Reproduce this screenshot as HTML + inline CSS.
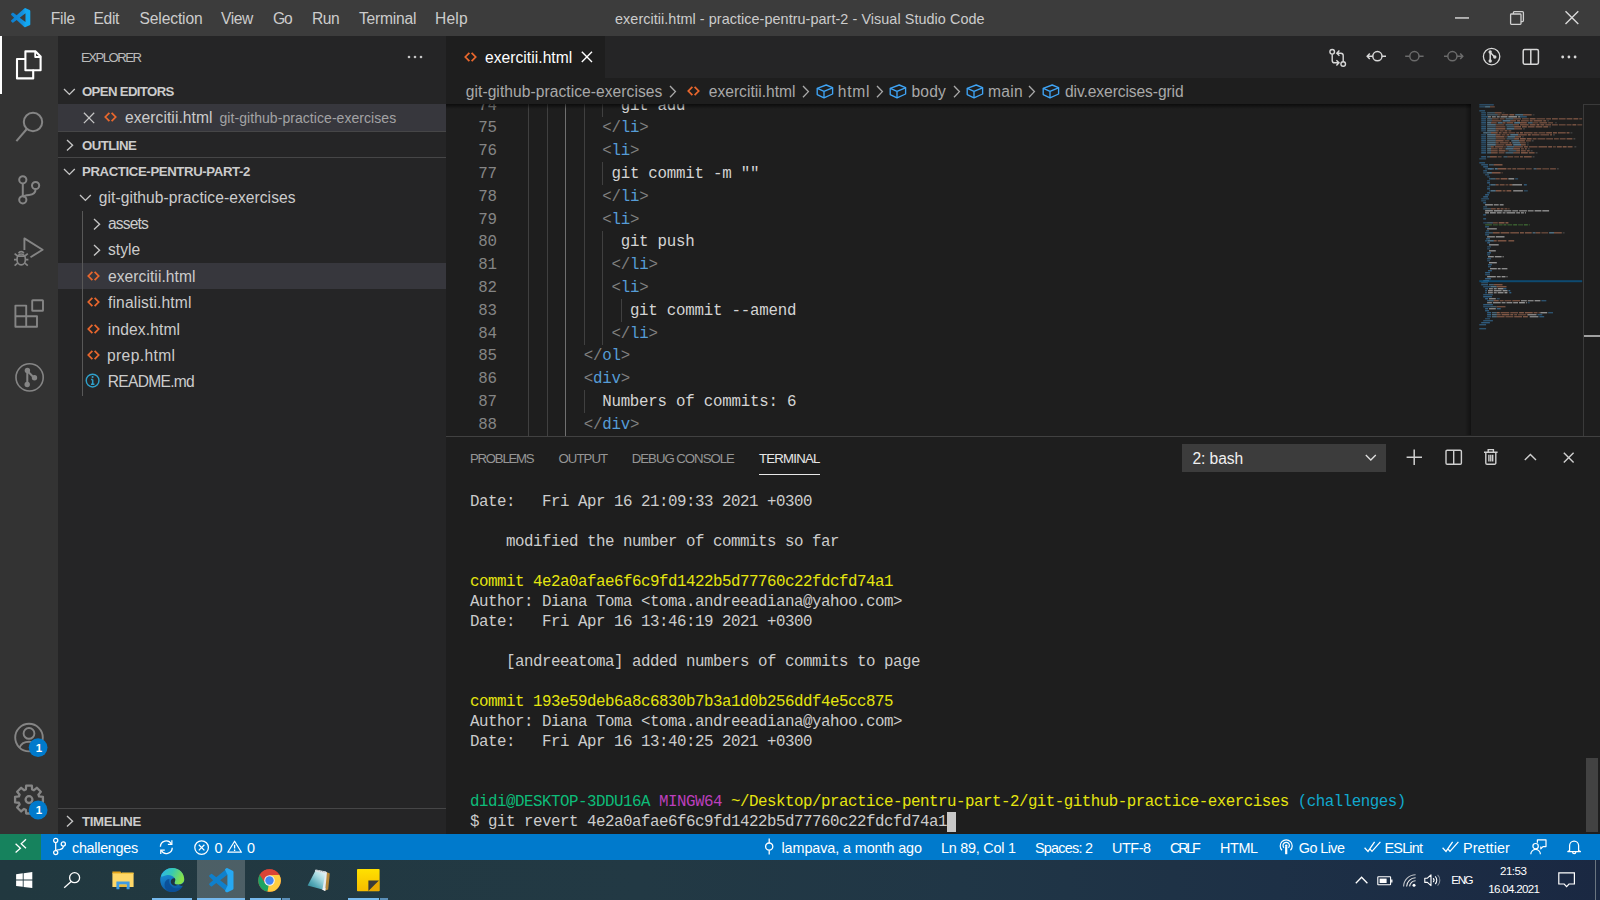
<!DOCTYPE html>
<html lang="en">
<head>
<meta charset="utf-8">
<title>exercitii.html - practice-pentru-part-2 - Visual Studio Code</title>
<style>
*{margin:0;padding:0;box-sizing:border-box}
html,body{width:1600px;height:900px;overflow:hidden;background:#1e1e1e}
body{font-family:"Liberation Sans",sans-serif;-webkit-font-smoothing:antialiased}
#root{position:relative;width:1600px;height:900px;overflow:hidden;background:#1e1e1e}
.b{position:absolute}
.t{position:absolute;white-space:pre;line-height:20px;height:20px}
.m{position:absolute;white-space:pre;font-family:"Liberation Mono",monospace}
svg{position:absolute;overflow:visible}
.ln{color:#858585}
.g{color:#808080}.k{color:#569cd6}.w{color:#d4d4d4}
.y{color:#e5e510}.gr{color:#0dbc79}.mg{color:#bc3fbc}.cy{color:#11a8cd}.f{color:#cccccc}
</style>
</head>
<body>
<div id="root">
<!-- title bar -->
<div class="b" style="left:0;top:0;width:1600px;height:36px;background:#3c3c3c"></div>
<!-- activity bar -->
<div class="b" style="left:0;top:36px;width:58px;height:798px;background:#333333"></div>
<div class="b" style="left:0;top:36px;width:2px;height:58px;background:#ffffff"></div>
<!-- sidebar -->
<div class="b" style="left:58px;top:36px;width:388px;height:798px;background:#252526"></div>
<div class="b" style="left:58px;top:104px;width:388px;height:27px;background:#37373d"></div>
<div class="b" style="left:58px;top:131px;width:388px;height:1px;background:#464647"></div>
<div class="b" style="left:58px;top:157px;width:388px;height:1px;background:#464647"></div>
<div class="b" style="left:58px;top:263px;width:388px;height:26px;background:#37373d"></div>
<div class="b" style="left:82px;top:210.5px;width:1px;height:185px;background:#585858"></div>
<div class="b" style="left:58px;top:807.5px;width:388px;height:1px;background:#464647"></div>
<!-- editor group: tab bar -->
<div class="b" style="left:446px;top:36px;width:1154px;height:42px;background:#252526"></div>
<div class="b" style="left:446px;top:36px;width:159px;height:42px;background:#1e1e1e"></div>
<!-- breadcrumb shadow -->
<div class="b" style="left:446px;top:104px;width:1025px;height:5px;background:linear-gradient(#00000099,#00000000);z-index:5"></div>
<!-- minimap shadow + ruler border -->
<div class="b" style="left:1465px;top:104px;width:6px;height:331px;background:linear-gradient(90deg,#00000000,#00000066)"></div>
<div class="b" style="left:1583px;top:104px;width:1px;height:332px;background:#3a3a3a"></div>
<div class="b" style="left:1583px;top:104px;width:17px;height:1px;background:#3a3a3a"></div>
<div class="b" style="left:1584px;top:334.5px;width:16px;height:2.4px;background:#a0a0a0"></div>
<!-- panel -->
<div class="b" style="left:446px;top:435.5px;width:1154px;height:1px;background:#414141"></div>
<div class="b" style="left:759px;top:474px;width:61px;height:1.2px;background:#e7e7e7"></div>
<div class="b" style="left:1182px;top:444.2px;width:204px;height:27.6px;background:#3c3c3c"></div>
<div class="b" style="left:1586px;top:758px;width:12px;height:74px;background:#424242"></div>
<div class="b" style="left:947px;top:812px;width:9px;height:20px;background:#c8c8c8"></div>
<!-- status bar -->
<div class="b" style="left:0;top:834px;width:1600px;height:26px;background:#007acc"></div>
<div class="b" style="left:0;top:834px;width:41px;height:26px;background:#16825d"></div>
<!-- taskbar -->
<div class="b" style="left:0;top:860px;width:1600px;height:40px;background:linear-gradient(90deg,#21383f 0%,#223944 40%,#203646 60%,#1d3046 80%,#1a2842 100%)"></div>
<div class="b" style="left:197px;top:860px;width:48px;height:40px;background:rgba(255,255,255,.195)"></div>
<div class="b" style="left:152px;top:898px;width:40px;height:2px;background:#76b9ed"></div>
<div class="b" style="left:197px;top:898px;width:48px;height:2px;background:#76b9ed"></div>
<div class="b" style="left:250px;top:898px;width:31.4px;height:2px;background:#76b9ed"></div>
<div class="b" style="left:282.3px;top:898px;width:7.7px;height:2px;background:#5b8fb8"></div>
<div class="b" style="left:348px;top:898px;width:31.2px;height:2px;background:#76b9ed"></div>
<div class="b" style="left:380.2px;top:898px;width:7.8px;height:2px;background:#5b8fb8"></div>
<div class="b" style="left:1595px;top:860px;width:1px;height:40px;background:#6a7580"></div>
<svg style="left:0;top:0" width="1600" height="440" viewBox="0 0 1600 440">
<rect x="1479.3" y="280.20" width="102.9" height="2" fill="#0e4a70"/>
<g opacity="0.85">
<rect x="1479.3" y="104.2" width="14.5" height="1.25" fill="#3b80b4" opacity="0.66"/>
<rect x="1479.3" y="106.2" width="5.8" height="1.25" fill="#3b80b4" opacity="0.60"/>
<rect x="1485.1" y="106.2" width="4.9" height="1.25" fill="#74aacb" opacity="0.78"/>
<rect x="1490.0" y="106.2" width="4.8" height="1.25" fill="#bd7c5f" opacity="0.58"/>
<rect x="1479.3" y="110.2" width="5.8" height="1.25" fill="#3b80b4" opacity="0.74"/>
<rect x="1481.2" y="112.2" width="4.8" height="1.25" fill="#3b80b4" opacity="0.68"/>
<rect x="1487.1" y="112.2" width="7.8" height="1.25" fill="#74aacb" opacity="0.57"/>
<rect x="1494.8" y="112.2" width="6.8" height="1.25" fill="#bd7c5f" opacity="0.73"/>
<rect x="1502.6" y="112.2" width="1.9" height="1.25" fill="#5c5c5c" opacity="0.56"/>
<rect x="1481.2" y="114.2" width="4.8" height="1.25" fill="#3b80b4" opacity="0.70"/>
<rect x="1487.1" y="114.2" width="10.7" height="1.25" fill="#74aacb" opacity="0.57"/>
<rect x="1497.7" y="114.2" width="2.9" height="1.25" fill="#bd7c5f" opacity="0.57"/>
<rect x="1501.6" y="114.2" width="6.8" height="1.25" fill="#bd7c5f" opacity="0.75"/>
<rect x="1509.4" y="114.2" width="4.9" height="1.25" fill="#bd7c5f" opacity="0.88"/>
<rect x="1515.2" y="114.2" width="7.8" height="1.25" fill="#74aacb" opacity="0.77"/>
<rect x="1523.0" y="114.2" width="8.7" height="1.25" fill="#bd7c5f" opacity="0.75"/>
<rect x="1532.6" y="114.2" width="1.9" height="1.25" fill="#5c5c5c" opacity="0.57"/>
<rect x="1481.2" y="116.2" width="6.8" height="1.25" fill="#3b80b4" opacity="0.75"/>
<rect x="1488.0" y="116.2" width="2.9" height="1.25" fill="#bdbdbd" opacity="0.86"/>
<rect x="1491.9" y="116.2" width="3.9" height="1.25" fill="#bdbdbd" opacity="0.83"/>
<rect x="1496.8" y="116.2" width="2.9" height="1.25" fill="#bdbdbd" opacity="0.82"/>
<rect x="1500.6" y="116.2" width="6.8" height="1.25" fill="#bdbdbd" opacity="0.86"/>
<rect x="1508.4" y="116.2" width="8.7" height="1.25" fill="#bdbdbd" opacity="0.96"/>
<rect x="1518.1" y="116.2" width="1.9" height="1.25" fill="#bdbdbd" opacity="0.84"/>
<rect x="1520.0" y="116.2" width="6.8" height="1.25" fill="#3b80b4" opacity="0.75"/>
<rect x="1481.2" y="118.2" width="4.8" height="1.25" fill="#3b80b4" opacity="0.77"/>
<rect x="1487.1" y="118.2" width="4.8" height="1.25" fill="#74aacb" opacity="0.68"/>
<rect x="1491.9" y="118.2" width="6.8" height="1.25" fill="#bd7c5f" opacity="0.57"/>
<rect x="1499.7" y="118.2" width="4.9" height="1.25" fill="#bd7c5f" opacity="0.57"/>
<rect x="1505.5" y="118.2" width="7.8" height="1.25" fill="#74aacb" opacity="0.62"/>
<rect x="1513.2" y="118.2" width="7.8" height="1.25" fill="#bd7c5f" opacity="0.64"/>
<rect x="1522.0" y="118.2" width="6.8" height="1.25" fill="#bd7c5f" opacity="0.61"/>
<rect x="1529.7" y="118.2" width="5.8" height="1.25" fill="#bd7c5f" opacity="0.82"/>
<rect x="1536.5" y="118.2" width="8.7" height="1.25" fill="#bd7c5f" opacity="0.58"/>
<rect x="1546.2" y="118.2" width="4.8" height="1.25" fill="#bd7c5f" opacity="0.66"/>
<rect x="1552.0" y="118.2" width="5.8" height="1.25" fill="#bd7c5f" opacity="0.72"/>
<rect x="1558.8" y="118.2" width="6.8" height="1.25" fill="#bd7c5f" opacity="0.67"/>
<rect x="1566.6" y="118.2" width="5.8" height="1.25" fill="#bd7c5f" opacity="0.71"/>
<rect x="1573.4" y="118.2" width="4.9" height="1.25" fill="#bd7c5f" opacity="0.76"/>
<rect x="1579.2" y="118.2" width="3.0" height="1.25" fill="#bd7c5f" opacity="0.58"/>
<rect x="1481.2" y="120.2" width="4.8" height="1.25" fill="#3b80b4" opacity="0.73"/>
<rect x="1487.1" y="120.2" width="4.8" height="1.25" fill="#74aacb" opacity="0.61"/>
<rect x="1491.9" y="120.2" width="9.7" height="1.25" fill="#bd7c5f" opacity="0.67"/>
<rect x="1502.6" y="120.2" width="7.8" height="1.25" fill="#74aacb" opacity="0.88"/>
<rect x="1510.3" y="120.2" width="5.8" height="1.25" fill="#bd7c5f" opacity="0.75"/>
<rect x="1517.1" y="120.2" width="2.9" height="1.25" fill="#bd7c5f" opacity="0.86"/>
<rect x="1521.0" y="120.2" width="7.8" height="1.25" fill="#bd7c5f" opacity="0.66"/>
<rect x="1529.7" y="120.2" width="2.9" height="1.25" fill="#bd7c5f" opacity="0.79"/>
<rect x="1533.6" y="120.2" width="8.7" height="1.25" fill="#bd7c5f" opacity="0.76"/>
<rect x="1543.3" y="120.2" width="2.9" height="1.25" fill="#bd7c5f" opacity="0.75"/>
<rect x="1547.2" y="120.2" width="1.9" height="1.25" fill="#5c5c5c" opacity="0.71"/>
<rect x="1481.2" y="122.2" width="4.8" height="1.25" fill="#3b80b4" opacity="0.84"/>
<rect x="1487.1" y="122.2" width="3.9" height="1.25" fill="#74aacb" opacity="0.88"/>
<rect x="1490.9" y="122.2" width="5.8" height="1.25" fill="#bd7c5f" opacity="0.72"/>
<rect x="1497.7" y="122.2" width="4.8" height="1.25" fill="#74aacb" opacity="0.78"/>
<rect x="1502.6" y="122.2" width="2.9" height="1.25" fill="#bd7c5f" opacity="0.80"/>
<rect x="1506.5" y="122.2" width="6.8" height="1.25" fill="#bd7c5f" opacity="0.78"/>
<rect x="1514.2" y="122.2" width="5.8" height="1.25" fill="#74aacb" opacity="0.90"/>
<rect x="1520.0" y="122.2" width="6.8" height="1.25" fill="#bd7c5f" opacity="0.84"/>
<rect x="1527.8" y="122.2" width="4.8" height="1.25" fill="#74aacb" opacity="0.65"/>
<rect x="1532.6" y="122.2" width="5.8" height="1.25" fill="#bd7c5f" opacity="0.56"/>
<rect x="1539.4" y="122.2" width="7.8" height="1.25" fill="#bd7c5f" opacity="0.71"/>
<rect x="1548.2" y="122.2" width="4.8" height="1.25" fill="#bd7c5f" opacity="0.61"/>
<rect x="1555.0" y="122.2" width="1.9" height="1.25" fill="#5c5c5c" opacity="0.59"/>
<rect x="1481.2" y="124.2" width="4.8" height="1.25" fill="#3b80b4" opacity="0.57"/>
<rect x="1487.1" y="124.2" width="8.7" height="1.25" fill="#74aacb" opacity="0.82"/>
<rect x="1495.8" y="124.2" width="8.7" height="1.25" fill="#bd7c5f" opacity="0.60"/>
<rect x="1505.5" y="124.2" width="7.8" height="1.25" fill="#74aacb" opacity="0.64"/>
<rect x="1513.2" y="124.2" width="5.8" height="1.25" fill="#bd7c5f" opacity="0.70"/>
<rect x="1520.0" y="124.2" width="8.7" height="1.25" fill="#bd7c5f" opacity="0.74"/>
<rect x="1529.7" y="124.2" width="5.8" height="1.25" fill="#bd7c5f" opacity="0.80"/>
<rect x="1536.5" y="124.2" width="2.9" height="1.25" fill="#bd7c5f" opacity="0.90"/>
<rect x="1540.4" y="124.2" width="3.9" height="1.25" fill="#bd7c5f" opacity="0.79"/>
<rect x="1545.3" y="124.2" width="5.8" height="1.25" fill="#bd7c5f" opacity="0.68"/>
<rect x="1552.0" y="124.2" width="5.8" height="1.25" fill="#bd7c5f" opacity="0.63"/>
<rect x="1558.8" y="124.2" width="6.8" height="1.25" fill="#bd7c5f" opacity="0.58"/>
<rect x="1566.6" y="124.2" width="4.9" height="1.25" fill="#bd7c5f" opacity="0.60"/>
<rect x="1572.4" y="124.2" width="3.9" height="1.25" fill="#bd7c5f" opacity="0.78"/>
<rect x="1577.3" y="124.2" width="4.9" height="1.25" fill="#bd7c5f" opacity="0.55"/>
<rect x="1481.2" y="126.2" width="4.8" height="1.25" fill="#3b80b4" opacity="0.84"/>
<rect x="1487.1" y="126.2" width="8.7" height="1.25" fill="#74aacb" opacity="0.61"/>
<rect x="1495.8" y="126.2" width="9.7" height="1.25" fill="#bd7c5f" opacity="0.65"/>
<rect x="1506.5" y="126.2" width="7.8" height="1.25" fill="#74aacb" opacity="0.60"/>
<rect x="1514.2" y="126.2" width="6.8" height="1.25" fill="#bd7c5f" opacity="0.88"/>
<rect x="1522.0" y="126.2" width="4.8" height="1.25" fill="#bd7c5f" opacity="0.79"/>
<rect x="1527.8" y="126.2" width="6.8" height="1.25" fill="#bd7c5f" opacity="0.73"/>
<rect x="1535.6" y="126.2" width="6.8" height="1.25" fill="#bd7c5f" opacity="0.77"/>
<rect x="1543.3" y="126.2" width="4.9" height="1.25" fill="#bd7c5f" opacity="0.79"/>
<rect x="1549.1" y="126.2" width="1.9" height="1.25" fill="#5c5c5c" opacity="0.57"/>
<rect x="1481.2" y="128.2" width="4.8" height="1.25" fill="#3b80b4" opacity="0.86"/>
<rect x="1487.1" y="128.2" width="8.7" height="1.25" fill="#74aacb" opacity="0.82"/>
<rect x="1495.8" y="128.2" width="9.7" height="1.25" fill="#bd7c5f" opacity="0.86"/>
<rect x="1506.5" y="128.2" width="7.8" height="1.25" fill="#74aacb" opacity="0.83"/>
<rect x="1514.2" y="128.2" width="7.8" height="1.25" fill="#bd7c5f" opacity="0.69"/>
<rect x="1523.0" y="128.2" width="1.9" height="1.25" fill="#5c5c5c" opacity="0.69"/>
<rect x="1481.2" y="130.2" width="4.8" height="1.25" fill="#3b80b4" opacity="0.59"/>
<rect x="1487.1" y="130.2" width="8.7" height="1.25" fill="#74aacb" opacity="0.77"/>
<rect x="1495.8" y="130.2" width="2.9" height="1.25" fill="#bd7c5f" opacity="0.70"/>
<rect x="1499.7" y="130.2" width="3.9" height="1.25" fill="#bd7c5f" opacity="0.59"/>
<rect x="1504.5" y="130.2" width="2.9" height="1.25" fill="#bd7c5f" opacity="0.76"/>
<rect x="1508.4" y="130.2" width="2.9" height="1.25" fill="#bd7c5f" opacity="0.59"/>
<rect x="1483.2" y="132.2" width="7.8" height="1.25" fill="#74aacb" opacity="0.75"/>
<rect x="1490.9" y="132.2" width="6.8" height="1.25" fill="#bd7c5f" opacity="0.88"/>
<rect x="1498.7" y="132.2" width="2.9" height="1.25" fill="#bd7c5f" opacity="0.76"/>
<rect x="1502.6" y="132.2" width="4.9" height="1.25" fill="#bd7c5f" opacity="0.72"/>
<rect x="1508.4" y="132.2" width="6.8" height="1.25" fill="#bd7c5f" opacity="0.59"/>
<rect x="1516.2" y="132.2" width="2.9" height="1.25" fill="#bd7c5f" opacity="0.72"/>
<rect x="1520.0" y="132.2" width="2.9" height="1.25" fill="#bd7c5f" opacity="0.89"/>
<rect x="1523.9" y="132.2" width="8.7" height="1.25" fill="#bd7c5f" opacity="0.72"/>
<rect x="1533.6" y="132.2" width="3.9" height="1.25" fill="#bd7c5f" opacity="0.66"/>
<rect x="1538.5" y="132.2" width="6.8" height="1.25" fill="#bd7c5f" opacity="0.60"/>
<rect x="1546.2" y="132.2" width="5.8" height="1.25" fill="#bd7c5f" opacity="0.81"/>
<rect x="1553.0" y="132.2" width="3.9" height="1.25" fill="#bd7c5f" opacity="0.81"/>
<rect x="1557.9" y="132.2" width="7.8" height="1.25" fill="#bd7c5f" opacity="0.72"/>
<rect x="1566.6" y="132.2" width="2.9" height="1.25" fill="#bd7c5f" opacity="0.79"/>
<rect x="1570.5" y="132.2" width="1.9" height="1.25" fill="#5c5c5c" opacity="0.73"/>
<rect x="1481.2" y="134.2" width="4.8" height="1.25" fill="#3b80b4" opacity="0.62"/>
<rect x="1487.1" y="134.2" width="8.7" height="1.25" fill="#74aacb" opacity="0.88"/>
<rect x="1495.8" y="134.2" width="4.8" height="1.25" fill="#bd7c5f" opacity="0.74"/>
<rect x="1501.6" y="134.2" width="3.9" height="1.25" fill="#bd7c5f" opacity="0.56"/>
<rect x="1506.5" y="134.2" width="2.9" height="1.25" fill="#bd7c5f" opacity="0.73"/>
<rect x="1510.3" y="134.2" width="7.8" height="1.25" fill="#74aacb" opacity="0.89"/>
<rect x="1518.1" y="134.2" width="8.7" height="1.25" fill="#bd7c5f" opacity="0.73"/>
<rect x="1527.8" y="134.2" width="2.9" height="1.25" fill="#bd7c5f" opacity="0.87"/>
<rect x="1531.7" y="134.2" width="7.8" height="1.25" fill="#bd7c5f" opacity="0.67"/>
<rect x="1540.4" y="134.2" width="8.7" height="1.25" fill="#bd7c5f" opacity="0.63"/>
<rect x="1550.1" y="134.2" width="1.9" height="1.25" fill="#bd7c5f" opacity="0.74"/>
<rect x="1553.0" y="134.2" width="1.9" height="1.25" fill="#5c5c5c" opacity="0.73"/>
<rect x="1481.2" y="136.2" width="4.8" height="1.25" fill="#3b80b4" opacity="0.77"/>
<rect x="1487.1" y="136.2" width="8.7" height="1.25" fill="#74aacb" opacity="0.76"/>
<rect x="1495.8" y="136.2" width="8.7" height="1.25" fill="#bd7c5f" opacity="0.85"/>
<rect x="1505.5" y="136.2" width="1.0" height="1.25" fill="#bd7c5f" opacity="0.83"/>
<rect x="1507.4" y="136.2" width="7.8" height="1.25" fill="#74aacb" opacity="0.84"/>
<rect x="1515.2" y="136.2" width="5.8" height="1.25" fill="#bd7c5f" opacity="0.81"/>
<rect x="1522.0" y="136.2" width="1.9" height="1.25" fill="#5c5c5c" opacity="0.63"/>
<rect x="1481.2" y="138.2" width="4.8" height="1.25" fill="#3b80b4" opacity="0.73"/>
<rect x="1487.1" y="138.2" width="8.7" height="1.25" fill="#74aacb" opacity="0.67"/>
<rect x="1495.8" y="138.2" width="9.7" height="1.25" fill="#bd7c5f" opacity="0.56"/>
<rect x="1506.5" y="138.2" width="7.8" height="1.25" fill="#74aacb" opacity="0.56"/>
<rect x="1514.2" y="138.2" width="4.8" height="1.25" fill="#bd7c5f" opacity="0.88"/>
<rect x="1520.0" y="138.2" width="5.8" height="1.25" fill="#bd7c5f" opacity="0.90"/>
<rect x="1526.8" y="138.2" width="4.8" height="1.25" fill="#bd7c5f" opacity="0.88"/>
<rect x="1532.6" y="138.2" width="3.9" height="1.25" fill="#bd7c5f" opacity="0.68"/>
<rect x="1537.5" y="138.2" width="7.8" height="1.25" fill="#bd7c5f" opacity="0.63"/>
<rect x="1546.2" y="138.2" width="6.8" height="1.25" fill="#bd7c5f" opacity="0.63"/>
<rect x="1554.0" y="138.2" width="4.8" height="1.25" fill="#bd7c5f" opacity="0.62"/>
<rect x="1559.8" y="138.2" width="5.8" height="1.25" fill="#bd7c5f" opacity="0.62"/>
<rect x="1566.6" y="138.2" width="5.8" height="1.25" fill="#bd7c5f" opacity="0.77"/>
<rect x="1573.4" y="138.2" width="1.9" height="1.25" fill="#5c5c5c" opacity="0.87"/>
<rect x="1481.2" y="140.2" width="4.8" height="1.25" fill="#3b80b4" opacity="0.84"/>
<rect x="1487.1" y="140.2" width="8.7" height="1.25" fill="#74aacb" opacity="0.72"/>
<rect x="1495.8" y="140.2" width="7.8" height="1.25" fill="#bd7c5f" opacity="0.83"/>
<rect x="1504.5" y="140.2" width="4.8" height="1.25" fill="#bd7c5f" opacity="0.58"/>
<rect x="1511.3" y="140.2" width="7.8" height="1.25" fill="#74aacb" opacity="0.78"/>
<rect x="1519.1" y="140.2" width="5.8" height="1.25" fill="#bd7c5f" opacity="0.80"/>
<rect x="1525.9" y="140.2" width="4.9" height="1.25" fill="#bd7c5f" opacity="0.62"/>
<rect x="1531.7" y="140.2" width="1.9" height="1.25" fill="#5c5c5c" opacity="0.86"/>
<rect x="1481.2" y="142.2" width="4.8" height="1.25" fill="#3b80b4" opacity="0.70"/>
<rect x="1487.1" y="142.2" width="8.7" height="1.25" fill="#74aacb" opacity="0.77"/>
<rect x="1495.8" y="142.2" width="2.9" height="1.25" fill="#bd7c5f" opacity="0.69"/>
<rect x="1499.7" y="142.2" width="8.7" height="1.25" fill="#bd7c5f" opacity="0.69"/>
<rect x="1509.4" y="142.2" width="1.9" height="1.25" fill="#bd7c5f" opacity="0.88"/>
<rect x="1512.3" y="142.2" width="7.8" height="1.25" fill="#74aacb" opacity="0.80"/>
<rect x="1520.0" y="142.2" width="5.8" height="1.25" fill="#bd7c5f" opacity="0.61"/>
<rect x="1526.8" y="142.2" width="1.9" height="1.25" fill="#5c5c5c" opacity="0.59"/>
<rect x="1481.2" y="144.2" width="4.8" height="1.25" fill="#3b80b4" opacity="0.60"/>
<rect x="1487.1" y="144.2" width="8.7" height="1.25" fill="#74aacb" opacity="0.87"/>
<rect x="1495.8" y="144.2" width="8.7" height="1.25" fill="#bd7c5f" opacity="0.60"/>
<rect x="1505.5" y="144.2" width="6.8" height="1.25" fill="#bd7c5f" opacity="0.84"/>
<rect x="1513.2" y="144.2" width="7.8" height="1.25" fill="#74aacb" opacity="0.89"/>
<rect x="1521.0" y="144.2" width="4.8" height="1.25" fill="#bd7c5f" opacity="0.78"/>
<rect x="1526.8" y="144.2" width="1.9" height="1.25" fill="#5c5c5c" opacity="0.67"/>
<rect x="1481.2" y="146.2" width="4.8" height="1.25" fill="#3b80b4" opacity="0.74"/>
<rect x="1487.1" y="146.2" width="3.9" height="1.25" fill="#74aacb" opacity="0.60"/>
<rect x="1490.9" y="146.2" width="2.9" height="1.25" fill="#bd7c5f" opacity="0.78"/>
<rect x="1494.8" y="146.2" width="8.7" height="1.25" fill="#bd7c5f" opacity="0.73"/>
<rect x="1504.5" y="146.2" width="1.0" height="1.25" fill="#bd7c5f" opacity="0.88"/>
<rect x="1506.5" y="146.2" width="7.8" height="1.25" fill="#74aacb" opacity="0.70"/>
<rect x="1514.2" y="146.2" width="8.7" height="1.25" fill="#bd7c5f" opacity="0.73"/>
<rect x="1523.9" y="146.2" width="3.9" height="1.25" fill="#bd7c5f" opacity="0.82"/>
<rect x="1528.8" y="146.2" width="8.7" height="1.25" fill="#bd7c5f" opacity="0.66"/>
<rect x="1538.5" y="146.2" width="8.7" height="1.25" fill="#bd7c5f" opacity="0.74"/>
<rect x="1548.2" y="146.2" width="3.9" height="1.25" fill="#bd7c5f" opacity="0.84"/>
<rect x="1553.0" y="146.2" width="2.9" height="1.25" fill="#bd7c5f" opacity="0.57"/>
<rect x="1556.9" y="146.2" width="4.9" height="1.25" fill="#bd7c5f" opacity="0.81"/>
<rect x="1562.7" y="146.2" width="3.9" height="1.25" fill="#bd7c5f" opacity="0.86"/>
<rect x="1567.6" y="146.2" width="4.9" height="1.25" fill="#bd7c5f" opacity="0.78"/>
<rect x="1574.4" y="146.2" width="1.9" height="1.25" fill="#5c5c5c" opacity="0.84"/>
<rect x="1481.2" y="148.2" width="4.8" height="1.25" fill="#3b80b4" opacity="0.73"/>
<rect x="1487.1" y="148.2" width="3.9" height="1.25" fill="#74aacb" opacity="0.84"/>
<rect x="1490.9" y="148.2" width="6.8" height="1.25" fill="#bd7c5f" opacity="0.60"/>
<rect x="1498.7" y="148.2" width="3.9" height="1.25" fill="#bd7c5f" opacity="0.73"/>
<rect x="1503.5" y="148.2" width="1.0" height="1.25" fill="#bd7c5f" opacity="0.86"/>
<rect x="1505.5" y="148.2" width="7.8" height="1.25" fill="#74aacb" opacity="0.82"/>
<rect x="1513.2" y="148.2" width="6.8" height="1.25" fill="#bd7c5f" opacity="0.83"/>
<rect x="1521.0" y="148.2" width="2.9" height="1.25" fill="#bd7c5f" opacity="0.61"/>
<rect x="1524.9" y="148.2" width="1.9" height="1.25" fill="#bd7c5f" opacity="0.72"/>
<rect x="1527.8" y="148.2" width="1.9" height="1.25" fill="#5c5c5c" opacity="0.80"/>
<rect x="1481.2" y="150.2" width="4.8" height="1.25" fill="#3b80b4" opacity="0.74"/>
<rect x="1487.1" y="150.2" width="3.9" height="1.25" fill="#74aacb" opacity="0.66"/>
<rect x="1490.9" y="150.2" width="6.8" height="1.25" fill="#bd7c5f" opacity="0.72"/>
<rect x="1498.7" y="150.2" width="6.8" height="1.25" fill="#bd7c5f" opacity="0.82"/>
<rect x="1506.5" y="150.2" width="1.0" height="1.25" fill="#bd7c5f" opacity="0.86"/>
<rect x="1508.4" y="150.2" width="7.8" height="1.25" fill="#74aacb" opacity="0.57"/>
<rect x="1516.2" y="150.2" width="3.9" height="1.25" fill="#bd7c5f" opacity="0.82"/>
<rect x="1521.0" y="150.2" width="4.8" height="1.25" fill="#bd7c5f" opacity="0.73"/>
<rect x="1526.8" y="150.2" width="2.9" height="1.25" fill="#bd7c5f" opacity="0.75"/>
<rect x="1530.7" y="150.2" width="1.9" height="1.25" fill="#5c5c5c" opacity="0.82"/>
<rect x="1481.2" y="152.2" width="4.8" height="1.25" fill="#3b80b4" opacity="0.87"/>
<rect x="1487.1" y="152.2" width="3.9" height="1.25" fill="#74aacb" opacity="0.71"/>
<rect x="1490.9" y="152.2" width="6.8" height="1.25" fill="#bd7c5f" opacity="0.76"/>
<rect x="1498.7" y="152.2" width="5.8" height="1.25" fill="#bd7c5f" opacity="0.62"/>
<rect x="1505.5" y="152.2" width="7.8" height="1.25" fill="#74aacb" opacity="0.65"/>
<rect x="1513.2" y="152.2" width="6.8" height="1.25" fill="#bd7c5f" opacity="0.72"/>
<rect x="1521.0" y="152.2" width="6.8" height="1.25" fill="#bd7c5f" opacity="0.88"/>
<rect x="1528.8" y="152.2" width="5.8" height="1.25" fill="#bd7c5f" opacity="0.79"/>
<rect x="1535.6" y="152.2" width="1.9" height="1.25" fill="#5c5c5c" opacity="0.86"/>
<rect x="1481.2" y="156.2" width="4.8" height="1.25" fill="#3b80b4" opacity="0.88"/>
<rect x="1487.1" y="156.2" width="2.9" height="1.25" fill="#74aacb" opacity="0.64"/>
<rect x="1490.0" y="156.2" width="6.8" height="1.25" fill="#bd7c5f" opacity="0.84"/>
<rect x="1497.7" y="156.2" width="3.9" height="1.25" fill="#bd7c5f" opacity="0.60"/>
<rect x="1503.5" y="156.2" width="3.9" height="1.25" fill="#74aacb" opacity="0.59"/>
<rect x="1507.4" y="156.2" width="5.8" height="1.25" fill="#bd7c5f" opacity="0.63"/>
<rect x="1514.2" y="156.2" width="4.8" height="1.25" fill="#bd7c5f" opacity="0.58"/>
<rect x="1520.0" y="156.2" width="2.9" height="1.25" fill="#bd7c5f" opacity="0.78"/>
<rect x="1523.9" y="156.2" width="7.8" height="1.25" fill="#bd7c5f" opacity="0.82"/>
<rect x="1532.6" y="156.2" width="1.9" height="1.25" fill="#5c5c5c" opacity="0.86"/>
<rect x="1479.3" y="158.2" width="6.8" height="1.25" fill="#3b80b4" opacity="0.60"/>
<rect x="1479.3" y="162.2" width="5.8" height="1.25" fill="#3b80b4" opacity="0.80"/>
<rect x="1481.2" y="164.2" width="6.8" height="1.25" fill="#3b80b4" opacity="0.78"/>
<rect x="1489.0" y="164.2" width="4.8" height="1.25" fill="#74aacb" opacity="0.60"/>
<rect x="1493.8" y="164.2" width="8.7" height="1.25" fill="#bd7c5f" opacity="0.86"/>
<rect x="1483.2" y="166.2" width="4.8" height="1.25" fill="#3b80b4" opacity="0.89"/>
<rect x="1485.1" y="168.2" width="2.9" height="1.25" fill="#3b80b4" opacity="0.63"/>
<rect x="1488.0" y="168.2" width="3.9" height="1.25" fill="#74aacb" opacity="0.88"/>
<rect x="1491.9" y="168.2" width="1.9" height="1.25" fill="#bd7c5f" opacity="0.69"/>
<rect x="1490.0" y="168.2" width="3.9" height="1.25" fill="#3b80b4" opacity="0.72"/>
<rect x="1494.8" y="168.2" width="2.9" height="1.25" fill="#74aacb" opacity="0.90"/>
<rect x="1497.7" y="168.2" width="8.7" height="1.25" fill="#bd7c5f" opacity="0.90"/>
<rect x="1507.4" y="168.2" width="3.9" height="1.25" fill="#bd7c5f" opacity="0.69"/>
<rect x="1512.3" y="168.2" width="3.9" height="1.25" fill="#bd7c5f" opacity="0.70"/>
<rect x="1517.1" y="168.2" width="7.8" height="1.25" fill="#bd7c5f" opacity="0.67"/>
<rect x="1525.9" y="168.2" width="5.8" height="1.25" fill="#bd7c5f" opacity="0.58"/>
<rect x="1533.6" y="168.2" width="2.9" height="1.25" fill="#74aacb" opacity="0.68"/>
<rect x="1536.5" y="168.2" width="4.8" height="1.25" fill="#bd7c5f" opacity="0.70"/>
<rect x="1542.3" y="168.2" width="6.8" height="1.25" fill="#bd7c5f" opacity="0.56"/>
<rect x="1550.1" y="168.2" width="5.8" height="1.25" fill="#bd7c5f" opacity="0.67"/>
<rect x="1556.9" y="168.2" width="1.9" height="1.25" fill="#5c5c5c" opacity="0.77"/>
<rect x="1483.2" y="170.2" width="3.9" height="1.25" fill="#3b80b4" opacity="0.73"/>
<rect x="1483.2" y="172.2" width="3.9" height="1.25" fill="#3b80b4" opacity="0.57"/>
<rect x="1487.1" y="172.2" width="4.8" height="1.25" fill="#74aacb" opacity="0.89"/>
<rect x="1491.9" y="172.2" width="8.7" height="1.25" fill="#bd7c5f" opacity="0.89"/>
<rect x="1501.6" y="172.2" width="1.0" height="1.25" fill="#bd7c5f" opacity="0.59"/>
<rect x="1485.1" y="174.2" width="3.9" height="1.25" fill="#3b80b4" opacity="0.64"/>
<rect x="1487.1" y="176.2" width="2.9" height="1.25" fill="#3b80b4" opacity="0.56"/>
<rect x="1489.0" y="178.2" width="1.9" height="1.25" fill="#3b80b4" opacity="0.82"/>
<rect x="1490.9" y="178.2" width="4.8" height="1.25" fill="#74aacb" opacity="0.64"/>
<rect x="1495.8" y="178.2" width="3.9" height="1.25" fill="#bd7c5f" opacity="0.70"/>
<rect x="1500.6" y="178.2" width="6.8" height="1.25" fill="#bd7c5f" opacity="0.87"/>
<rect x="1508.4" y="178.2" width="5.8" height="1.25" fill="#bdbdbd" opacity="0.96"/>
<rect x="1515.2" y="178.2" width="2.9" height="1.25" fill="#3b80b4" opacity="0.64"/>
<rect x="1487.1" y="180.2" width="2.9" height="1.25" fill="#3b80b4" opacity="0.60"/>
<rect x="1487.1" y="182.2" width="2.9" height="1.25" fill="#3b80b4" opacity="0.87"/>
<rect x="1489.0" y="184.2" width="1.9" height="1.25" fill="#3b80b4" opacity="0.75"/>
<rect x="1490.9" y="184.2" width="4.8" height="1.25" fill="#74aacb" opacity="0.80"/>
<rect x="1495.8" y="184.2" width="2.9" height="1.25" fill="#bd7c5f" opacity="0.79"/>
<rect x="1499.7" y="184.2" width="4.9" height="1.25" fill="#bd7c5f" opacity="0.70"/>
<rect x="1505.5" y="184.2" width="2.9" height="1.25" fill="#bd7c5f" opacity="0.58"/>
<rect x="1509.4" y="184.2" width="2.9" height="1.25" fill="#bd7c5f" opacity="0.88"/>
<rect x="1512.3" y="184.2" width="9.7" height="1.25" fill="#bdbdbd" opacity="0.93"/>
<rect x="1523.9" y="184.2" width="2.9" height="1.25" fill="#3b80b4" opacity="0.83"/>
<rect x="1487.1" y="186.2" width="2.9" height="1.25" fill="#3b80b4" opacity="0.58"/>
<rect x="1487.1" y="188.2" width="2.9" height="1.25" fill="#3b80b4" opacity="0.85"/>
<rect x="1489.0" y="190.2" width="1.9" height="1.25" fill="#3b80b4" opacity="0.57"/>
<rect x="1490.9" y="190.2" width="4.8" height="1.25" fill="#74aacb" opacity="0.85"/>
<rect x="1495.8" y="190.2" width="5.8" height="1.25" fill="#bd7c5f" opacity="0.90"/>
<rect x="1502.6" y="190.2" width="2.9" height="1.25" fill="#bd7c5f" opacity="0.70"/>
<rect x="1506.5" y="190.2" width="4.8" height="1.25" fill="#bd7c5f" opacity="0.87"/>
<rect x="1513.2" y="190.2" width="9.7" height="1.25" fill="#bdbdbd" opacity="0.92"/>
<rect x="1523.9" y="190.2" width="3.9" height="1.25" fill="#3b80b4" opacity="0.57"/>
<rect x="1487.1" y="192.2" width="2.9" height="1.25" fill="#3b80b4" opacity="0.80"/>
<rect x="1485.1" y="194.2" width="3.9" height="1.25" fill="#3b80b4" opacity="0.88"/>
<rect x="1483.2" y="196.2" width="4.8" height="1.25" fill="#3b80b4" opacity="0.89"/>
<rect x="1481.2" y="198.2" width="7.8" height="1.25" fill="#3b80b4" opacity="0.64"/>
<rect x="1481.2" y="200.2" width="4.8" height="1.25" fill="#3b80b4" opacity="0.61"/>
<rect x="1483.2" y="202.2" width="2.9" height="1.25" fill="#3b80b4" opacity="0.88"/>
<rect x="1485.1" y="204.2" width="7.8" height="1.25" fill="#bdbdbd" opacity="0.95"/>
<rect x="1493.8" y="204.2" width="4.9" height="1.25" fill="#bdbdbd" opacity="0.86"/>
<rect x="1499.7" y="204.2" width="3.9" height="1.25" fill="#bdbdbd" opacity="0.90"/>
<rect x="1483.2" y="206.2" width="3.9" height="1.25" fill="#3b80b4" opacity="0.61"/>
<rect x="1483.2" y="208.2" width="1.9" height="1.25" fill="#3b80b4" opacity="0.67"/>
<rect x="1485.1" y="208.2" width="5.8" height="1.25" fill="#74aacb" opacity="0.56"/>
<rect x="1490.9" y="208.2" width="4.8" height="1.25" fill="#bd7c5f" opacity="0.73"/>
<rect x="1496.8" y="208.2" width="2.9" height="1.25" fill="#bd7c5f" opacity="0.89"/>
<rect x="1500.6" y="208.2" width="2.9" height="1.25" fill="#bd7c5f" opacity="0.73"/>
<rect x="1504.5" y="208.2" width="2.9" height="1.25" fill="#bd7c5f" opacity="0.64"/>
<rect x="1508.4" y="208.2" width="1.0" height="1.25" fill="#bd7c5f" opacity="0.71"/>
<rect x="1485.1" y="210.2" width="7.8" height="1.25" fill="#bdbdbd" opacity="0.98"/>
<rect x="1493.8" y="210.2" width="8.7" height="1.25" fill="#bdbdbd" opacity="0.99"/>
<rect x="1503.5" y="210.2" width="7.8" height="1.25" fill="#bdbdbd" opacity="0.86"/>
<rect x="1512.3" y="210.2" width="5.8" height="1.25" fill="#bdbdbd" opacity="0.84"/>
<rect x="1519.1" y="210.2" width="7.8" height="1.25" fill="#bdbdbd" opacity="0.85"/>
<rect x="1527.8" y="210.2" width="5.8" height="1.25" fill="#bdbdbd" opacity="0.84"/>
<rect x="1534.6" y="210.2" width="6.8" height="1.25" fill="#bdbdbd" opacity="0.98"/>
<rect x="1542.3" y="210.2" width="6.8" height="1.25" fill="#bdbdbd" opacity="0.95"/>
<rect x="1485.1" y="212.2" width="3.9" height="1.25" fill="#bdbdbd" opacity="0.93"/>
<rect x="1490.0" y="212.2" width="5.8" height="1.25" fill="#bdbdbd" opacity="0.98"/>
<rect x="1496.8" y="212.2" width="4.8" height="1.25" fill="#bdbdbd" opacity="0.89"/>
<rect x="1502.6" y="212.2" width="2.9" height="1.25" fill="#bdbdbd" opacity="0.81"/>
<rect x="1506.5" y="212.2" width="8.7" height="1.25" fill="#bdbdbd" opacity="0.93"/>
<rect x="1516.2" y="212.2" width="3.9" height="1.25" fill="#bdbdbd" opacity="0.88"/>
<rect x="1521.0" y="212.2" width="2.9" height="1.25" fill="#bdbdbd" opacity="0.90"/>
<rect x="1524.9" y="212.2" width="1.0" height="1.25" fill="#bdbdbd" opacity="0.99"/>
<rect x="1483.2" y="214.2" width="2.9" height="1.25" fill="#3b80b4" opacity="0.76"/>
<rect x="1483.2" y="218.2" width="2.9" height="1.25" fill="#3b80b4" opacity="0.79"/>
<rect x="1483.2" y="222.2" width="3.9" height="1.25" fill="#3b80b4" opacity="0.57"/>
<rect x="1487.1" y="222.2" width="5.8" height="1.25" fill="#74aacb" opacity="0.61"/>
<rect x="1492.9" y="222.2" width="4.9" height="1.25" fill="#bd7c5f" opacity="0.64"/>
<rect x="1498.7" y="222.2" width="5.8" height="1.25" fill="#bd7c5f" opacity="0.89"/>
<rect x="1505.5" y="222.2" width="2.9" height="1.25" fill="#bd7c5f" opacity="0.89"/>
<rect x="1485.1" y="224.2" width="6.8" height="1.25" fill="#4f8f3f" opacity="0.67"/>
<rect x="1492.9" y="224.2" width="4.9" height="1.25" fill="#4f8f3f" opacity="0.58"/>
<rect x="1498.7" y="224.2" width="3.9" height="1.25" fill="#4f8f3f" opacity="0.65"/>
<rect x="1503.5" y="224.2" width="2.9" height="1.25" fill="#4f8f3f" opacity="0.78"/>
<rect x="1507.4" y="224.2" width="4.8" height="1.25" fill="#4f8f3f" opacity="0.64"/>
<rect x="1513.2" y="224.2" width="3.9" height="1.25" fill="#4f8f3f" opacity="0.82"/>
<rect x="1518.1" y="224.2" width="4.9" height="1.25" fill="#4f8f3f" opacity="0.58"/>
<rect x="1523.9" y="224.2" width="3.9" height="1.25" fill="#4f8f3f" opacity="0.84"/>
<rect x="1528.8" y="224.2" width="1.0" height="1.25" fill="#4f8f3f" opacity="0.60"/>
<rect x="1485.1" y="226.2" width="3.9" height="1.25" fill="#3b80b4" opacity="0.76"/>
<rect x="1487.1" y="228.2" width="9.7" height="1.25" fill="#bdbdbd" opacity="0.88"/>
<rect x="1486.1" y="230.2" width="2.9" height="1.25" fill="#3b80b4" opacity="0.65"/>
<rect x="1485.1" y="232.2" width="3.9" height="1.25" fill="#3b80b4" opacity="0.77"/>
<rect x="1489.0" y="232.2" width="3.9" height="1.25" fill="#74aacb" opacity="0.58"/>
<rect x="1492.9" y="232.2" width="6.8" height="1.25" fill="#bd7c5f" opacity="0.86"/>
<rect x="1500.6" y="232.2" width="8.7" height="1.25" fill="#bd7c5f" opacity="0.82"/>
<rect x="1510.3" y="232.2" width="8.7" height="1.25" fill="#bd7c5f" opacity="0.76"/>
<rect x="1520.0" y="232.2" width="3.9" height="1.25" fill="#bd7c5f" opacity="0.82"/>
<rect x="1524.9" y="232.2" width="6.8" height="1.25" fill="#bd7c5f" opacity="0.80"/>
<rect x="1532.6" y="232.2" width="2.9" height="1.25" fill="#74aacb" opacity="0.72"/>
<rect x="1535.6" y="232.2" width="4.8" height="1.25" fill="#bd7c5f" opacity="0.77"/>
<rect x="1541.4" y="232.2" width="6.8" height="1.25" fill="#bd7c5f" opacity="0.60"/>
<rect x="1549.1" y="232.2" width="4.9" height="1.25" fill="#74aacb" opacity="0.84"/>
<rect x="1554.0" y="232.2" width="7.8" height="1.25" fill="#bd7c5f" opacity="0.80"/>
<rect x="1562.7" y="232.2" width="1.9" height="1.25" fill="#5c5c5c" opacity="0.73"/>
<rect x="1485.1" y="234.2" width="3.9" height="1.25" fill="#3b80b4" opacity="0.70"/>
<rect x="1487.1" y="236.2" width="7.8" height="1.25" fill="#bdbdbd" opacity="0.90"/>
<rect x="1495.8" y="236.2" width="8.7" height="1.25" fill="#bdbdbd" opacity="0.98"/>
<rect x="1486.1" y="238.2" width="3.9" height="1.25" fill="#3b80b4" opacity="0.81"/>
<rect x="1485.1" y="240.2" width="2.9" height="1.25" fill="#3b80b4" opacity="0.75"/>
<rect x="1488.0" y="240.2" width="5.8" height="1.25" fill="#74aacb" opacity="0.83"/>
<rect x="1493.8" y="240.2" width="2.9" height="1.25" fill="#bd7c5f" opacity="0.79"/>
<rect x="1497.7" y="240.2" width="8.7" height="1.25" fill="#bd7c5f" opacity="0.83"/>
<rect x="1508.4" y="240.2" width="5.8" height="1.25" fill="#bd7c5f" opacity="0.80"/>
<rect x="1487.1" y="242.2" width="2.9" height="1.25" fill="#3b80b4" opacity="0.88"/>
<rect x="1489.0" y="244.2" width="9.7" height="1.25" fill="#bdbdbd" opacity="0.93"/>
<rect x="1487.1" y="246.2" width="3.9" height="1.25" fill="#3b80b4" opacity="0.58"/>
<rect x="1487.1" y="248.2" width="2.9" height="1.25" fill="#3b80b4" opacity="0.56"/>
<rect x="1489.0" y="250.2" width="6.8" height="1.25" fill="#bdbdbd" opacity="0.93"/>
<rect x="1487.1" y="252.2" width="3.9" height="1.25" fill="#3b80b4" opacity="0.89"/>
<rect x="1487.1" y="254.2" width="2.9" height="1.25" fill="#3b80b4" opacity="0.68"/>
<rect x="1488.0" y="256.1" width="5.8" height="1.25" fill="#bdbdbd" opacity="0.93"/>
<rect x="1494.8" y="256.1" width="6.8" height="1.25" fill="#bdbdbd" opacity="0.93"/>
<rect x="1502.6" y="256.1" width="1.0" height="1.25" fill="#bdbdbd" opacity="0.94"/>
<rect x="1487.1" y="258.1" width="3.9" height="1.25" fill="#3b80b4" opacity="0.72"/>
<rect x="1487.1" y="260.1" width="2.9" height="1.25" fill="#3b80b4" opacity="0.55"/>
<rect x="1489.0" y="262.1" width="7.8" height="1.25" fill="#bdbdbd" opacity="0.96"/>
<rect x="1488.0" y="264.1" width="3.9" height="1.25" fill="#3b80b4" opacity="0.81"/>
<rect x="1488.0" y="266.1" width="2.9" height="1.25" fill="#3b80b4" opacity="0.73"/>
<rect x="1490.0" y="268.1" width="6.8" height="1.25" fill="#bdbdbd" opacity="0.91"/>
<rect x="1497.7" y="268.1" width="2.9" height="1.25" fill="#bdbdbd" opacity="0.95"/>
<rect x="1501.6" y="268.1" width="5.8" height="1.25" fill="#bdbdbd" opacity="0.89"/>
<rect x="1488.0" y="270.1" width="3.9" height="1.25" fill="#3b80b4" opacity="0.83"/>
<rect x="1485.1" y="272.1" width="4.9" height="1.25" fill="#3b80b4" opacity="0.85"/>
<rect x="1485.1" y="274.1" width="4.9" height="1.25" fill="#3b80b4" opacity="0.63"/>
<rect x="1487.1" y="276.1" width="8.7" height="1.25" fill="#bdbdbd" opacity="0.93"/>
<rect x="1496.8" y="276.1" width="3.9" height="1.25" fill="#bdbdbd" opacity="0.89"/>
<rect x="1501.6" y="276.1" width="3.9" height="1.25" fill="#bdbdbd" opacity="0.97"/>
<rect x="1506.5" y="276.1" width="1.0" height="1.25" fill="#bdbdbd" opacity="0.82"/>
<rect x="1485.1" y="278.1" width="5.8" height="1.25" fill="#3b80b4" opacity="0.87"/>
<rect x="1483.2" y="280.1" width="5.8" height="1.25" fill="#3b80b4" opacity="0.65"/>
<rect x="1481.2" y="282.1" width="6.8" height="1.25" fill="#3b80b4" opacity="0.57"/>
<rect x="1481.2" y="284.1" width="6.8" height="1.25" fill="#3b80b4" opacity="0.77"/>
<rect x="1489.0" y="284.1" width="4.8" height="1.25" fill="#74aacb" opacity="0.62"/>
<rect x="1493.8" y="284.1" width="8.7" height="1.25" fill="#bd7c5f" opacity="0.76"/>
<rect x="1483.2" y="286.1" width="7.8" height="1.25" fill="#3b80b4" opacity="0.67"/>
<rect x="1490.9" y="286.1" width="5.8" height="1.25" fill="#74aacb" opacity="0.78"/>
<rect x="1496.8" y="286.1" width="9.7" height="1.25" fill="#bd7c5f" opacity="0.79"/>
<rect x="1485.1" y="288.1" width="2.9" height="1.25" fill="#3b80b4" opacity="0.77"/>
<rect x="1489.0" y="288.1" width="3.9" height="1.25" fill="#bdbdbd" opacity="0.81"/>
<rect x="1493.8" y="288.1" width="2.9" height="1.25" fill="#bdbdbd" opacity="0.85"/>
<rect x="1497.7" y="288.1" width="5.8" height="1.25" fill="#bdbdbd" opacity="0.93"/>
<rect x="1503.5" y="288.1" width="2.9" height="1.25" fill="#3b80b4" opacity="0.79"/>
<rect x="1485.1" y="290.1" width="1.9" height="1.25" fill="#3b80b4" opacity="0.79"/>
<rect x="1488.0" y="290.1" width="4.8" height="1.25" fill="#bdbdbd" opacity="0.86"/>
<rect x="1493.8" y="290.1" width="7.8" height="1.25" fill="#bdbdbd" opacity="0.89"/>
<rect x="1502.6" y="290.1" width="4.9" height="1.25" fill="#bdbdbd" opacity="0.95"/>
<rect x="1508.4" y="290.1" width="1.9" height="1.25" fill="#3b80b4" opacity="0.90"/>
<rect x="1485.1" y="292.1" width="1.9" height="1.25" fill="#3b80b4" opacity="0.74"/>
<rect x="1488.0" y="292.1" width="4.8" height="1.25" fill="#bdbdbd" opacity="0.86"/>
<rect x="1493.8" y="292.1" width="2.9" height="1.25" fill="#bdbdbd" opacity="0.82"/>
<rect x="1497.7" y="292.1" width="5.8" height="1.25" fill="#bdbdbd" opacity="0.90"/>
<rect x="1504.5" y="292.1" width="2.9" height="1.25" fill="#bdbdbd" opacity="1.00"/>
<rect x="1509.4" y="292.1" width="1.9" height="1.25" fill="#3b80b4" opacity="0.90"/>
<rect x="1483.2" y="294.1" width="9.7" height="1.25" fill="#3b80b4" opacity="0.69"/>
<rect x="1483.2" y="296.1" width="8.7" height="1.25" fill="#3b80b4" opacity="0.87"/>
<rect x="1485.1" y="298.1" width="2.9" height="1.25" fill="#3b80b4" opacity="0.88"/>
<rect x="1489.0" y="298.1" width="6.8" height="1.25" fill="#bdbdbd" opacity="0.81"/>
<rect x="1496.8" y="298.1" width="2.9" height="1.25" fill="#3b80b4" opacity="0.58"/>
<rect x="1487.1" y="300.1" width="1.9" height="1.25" fill="#3b80b4" opacity="0.81"/>
<rect x="1489.0" y="300.1" width="4.8" height="1.25" fill="#74aacb" opacity="0.64"/>
<rect x="1493.8" y="300.1" width="4.9" height="1.25" fill="#bd7c5f" opacity="0.77"/>
<rect x="1499.7" y="300.1" width="3.9" height="1.25" fill="#bd7c5f" opacity="0.65"/>
<rect x="1504.5" y="300.1" width="6.8" height="1.25" fill="#bd7c5f" opacity="0.59"/>
<rect x="1512.3" y="300.1" width="7.8" height="1.25" fill="#bd7c5f" opacity="0.68"/>
<rect x="1521.0" y="300.1" width="5.8" height="1.25" fill="#bdbdbd" opacity="0.80"/>
<rect x="1527.8" y="300.1" width="5.8" height="1.25" fill="#bdbdbd" opacity="0.80"/>
<rect x="1534.6" y="300.1" width="5.8" height="1.25" fill="#bdbdbd" opacity="0.90"/>
<rect x="1541.4" y="300.1" width="4.9" height="1.25" fill="#3b80b4" opacity="0.71"/>
<rect x="1487.1" y="302.1" width="4.8" height="1.25" fill="#bdbdbd" opacity="0.82"/>
<rect x="1492.9" y="302.1" width="7.8" height="1.25" fill="#bdbdbd" opacity="0.87"/>
<rect x="1501.6" y="302.1" width="3.9" height="1.25" fill="#bdbdbd" opacity="0.86"/>
<rect x="1506.5" y="302.1" width="5.8" height="1.25" fill="#bdbdbd" opacity="0.87"/>
<rect x="1513.2" y="302.1" width="4.8" height="1.25" fill="#bdbdbd" opacity="0.88"/>
<rect x="1519.1" y="302.1" width="5.8" height="1.25" fill="#bdbdbd" opacity="0.99"/>
<rect x="1525.9" y="302.1" width="1.0" height="1.25" fill="#bdbdbd" opacity="0.84"/>
<rect x="1527.8" y="302.1" width="1.9" height="1.25" fill="#3b80b4" opacity="0.55"/>
<rect x="1483.2" y="304.1" width="9.7" height="1.25" fill="#3b80b4" opacity="0.81"/>
<rect x="1483.2" y="306.1" width="7.8" height="1.25" fill="#3b80b4" opacity="0.64"/>
<rect x="1490.9" y="306.1" width="5.8" height="1.25" fill="#74aacb" opacity="0.57"/>
<rect x="1496.8" y="306.1" width="8.7" height="1.25" fill="#bd7c5f" opacity="0.69"/>
<rect x="1485.1" y="308.1" width="2.9" height="1.25" fill="#3b80b4" opacity="0.85"/>
<rect x="1489.0" y="308.1" width="6.8" height="1.25" fill="#bdbdbd" opacity="0.82"/>
<rect x="1496.8" y="308.1" width="3.9" height="1.25" fill="#3b80b4" opacity="0.87"/>
<rect x="1485.1" y="310.1" width="3.9" height="1.25" fill="#3b80b4" opacity="0.81"/>
<rect x="1487.1" y="312.1" width="3.9" height="1.25" fill="#3b80b4" opacity="0.85"/>
<rect x="1491.9" y="312.1" width="4.9" height="1.25" fill="#74aacb" opacity="0.65"/>
<rect x="1496.8" y="312.1" width="2.9" height="1.25" fill="#bd7c5f" opacity="0.89"/>
<rect x="1500.6" y="312.1" width="8.7" height="1.25" fill="#bd7c5f" opacity="0.70"/>
<rect x="1510.3" y="312.1" width="7.8" height="1.25" fill="#bd7c5f" opacity="0.66"/>
<rect x="1519.1" y="312.1" width="4.8" height="1.25" fill="#bd7c5f" opacity="0.82"/>
<rect x="1524.9" y="312.1" width="7.8" height="1.25" fill="#bd7c5f" opacity="0.82"/>
<rect x="1533.6" y="312.1" width="3.9" height="1.25" fill="#bd7c5f" opacity="0.70"/>
<rect x="1538.5" y="312.1" width="1.9" height="1.25" fill="#bd7c5f" opacity="0.56"/>
<rect x="1540.4" y="312.1" width="6.8" height="1.25" fill="#bdbdbd" opacity="0.95"/>
<rect x="1548.2" y="312.1" width="4.8" height="1.25" fill="#3b80b4" opacity="0.69"/>
<rect x="1487.1" y="314.1" width="3.9" height="1.25" fill="#3b80b4" opacity="0.86"/>
<rect x="1491.9" y="314.1" width="4.9" height="1.25" fill="#74aacb" opacity="0.74"/>
<rect x="1496.8" y="314.1" width="3.9" height="1.25" fill="#bd7c5f" opacity="0.71"/>
<rect x="1501.6" y="314.1" width="7.8" height="1.25" fill="#bd7c5f" opacity="0.81"/>
<rect x="1510.3" y="314.1" width="2.9" height="1.25" fill="#bd7c5f" opacity="0.78"/>
<rect x="1514.2" y="314.1" width="2.9" height="1.25" fill="#bd7c5f" opacity="0.65"/>
<rect x="1518.1" y="314.1" width="7.8" height="1.25" fill="#bd7c5f" opacity="0.57"/>
<rect x="1526.8" y="314.1" width="1.0" height="1.25" fill="#bd7c5f" opacity="0.87"/>
<rect x="1527.8" y="314.1" width="8.7" height="1.25" fill="#bdbdbd" opacity="0.83"/>
<rect x="1537.5" y="314.1" width="4.8" height="1.25" fill="#3b80b4" opacity="0.72"/>
<rect x="1487.1" y="316.1" width="3.9" height="1.25" fill="#3b80b4" opacity="0.67"/>
<rect x="1491.9" y="316.1" width="4.9" height="1.25" fill="#74aacb" opacity="0.65"/>
<rect x="1496.8" y="316.1" width="7.8" height="1.25" fill="#bd7c5f" opacity="0.69"/>
<rect x="1505.5" y="316.1" width="7.8" height="1.25" fill="#bd7c5f" opacity="0.63"/>
<rect x="1514.2" y="316.1" width="7.8" height="1.25" fill="#bd7c5f" opacity="0.72"/>
<rect x="1523.0" y="316.1" width="4.8" height="1.25" fill="#bd7c5f" opacity="0.78"/>
<rect x="1529.7" y="316.1" width="8.7" height="1.25" fill="#bdbdbd" opacity="0.82"/>
<rect x="1539.4" y="316.1" width="4.8" height="1.25" fill="#3b80b4" opacity="0.78"/>
<rect x="1485.1" y="318.1" width="4.9" height="1.25" fill="#3b80b4" opacity="0.58"/>
<rect x="1483.2" y="320.1" width="9.7" height="1.25" fill="#3b80b4" opacity="0.73"/>
<rect x="1481.2" y="322.1" width="8.7" height="1.25" fill="#3b80b4" opacity="0.83"/>
<rect x="1479.3" y="324.1" width="6.8" height="1.25" fill="#3b80b4" opacity="0.74"/>
<rect x="1479.3" y="328.1" width="6.8" height="1.25" fill="#3b80b4" opacity="0.71"/>
</g></svg>
<div class="b" style="left:446px;top:104px;width:1025px;height:331.5px;overflow:hidden">
<div class="b" style="left:82.25px;top:-10.25px;width:1px;height:342.00px;background:#404040"></div>
<div class="b" style="left:100.73px;top:-10.25px;width:1px;height:342.00px;background:#404040"></div>
<div class="b" style="left:119.21px;top:-10.25px;width:1px;height:342.00px;background:#707070"></div>
<div class="b" style="left:137.69px;top:-10.25px;width:1px;height:250.80px;background:#404040"></div>
<div class="b" style="left:137.69px;top:286.15px;width:1px;height:22.80px;background:#404040"></div>
<div class="b" style="left:156.17px;top:-10.25px;width:1px;height:22.80px;background:#404040"></div>
<div class="b" style="left:156.17px;top:58.15px;width:1px;height:22.80px;background:#404040"></div>
<div class="b" style="left:156.17px;top:126.55px;width:1px;height:114.00px;background:#404040"></div>
<div class="b" style="left:174.65px;top:194.95px;width:1px;height:22.80px;background:#404040"></div>
<div class="m ln" style="left:32.30px;top:-9.50px;font-size:15.8px;letter-spacing:-0.242px;line-height:22.8px">74</div>
<div class="m" style="left:174.65px;top:-9.50px;font-size:15.8px;letter-spacing:-0.242px;line-height:22.8px"><span class="w">git add</span></div>
<div class="m ln" style="left:32.30px;top:13.30px;font-size:15.8px;letter-spacing:-0.242px;line-height:22.8px">75</div>
<div class="m" style="left:156.17px;top:13.30px;font-size:15.8px;letter-spacing:-0.242px;line-height:22.8px"><span class="g">&lt;/</span><span class="k">li</span><span class="g">&gt;</span></div>
<div class="m ln" style="left:32.30px;top:36.10px;font-size:15.8px;letter-spacing:-0.242px;line-height:22.8px">76</div>
<div class="m" style="left:156.17px;top:36.10px;font-size:15.8px;letter-spacing:-0.242px;line-height:22.8px"><span class="g">&lt;</span><span class="k">li</span><span class="g">&gt;</span></div>
<div class="m ln" style="left:32.30px;top:58.90px;font-size:15.8px;letter-spacing:-0.242px;line-height:22.8px">77</div>
<div class="m" style="left:165.41px;top:58.90px;font-size:15.8px;letter-spacing:-0.242px;line-height:22.8px"><span class="w">git commit -m ""</span></div>
<div class="m ln" style="left:32.30px;top:81.70px;font-size:15.8px;letter-spacing:-0.242px;line-height:22.8px">78</div>
<div class="m" style="left:156.17px;top:81.70px;font-size:15.8px;letter-spacing:-0.242px;line-height:22.8px"><span class="g">&lt;/</span><span class="k">li</span><span class="g">&gt;</span></div>
<div class="m ln" style="left:32.30px;top:104.50px;font-size:15.8px;letter-spacing:-0.242px;line-height:22.8px">79</div>
<div class="m" style="left:156.17px;top:104.50px;font-size:15.8px;letter-spacing:-0.242px;line-height:22.8px"><span class="g">&lt;</span><span class="k">li</span><span class="g">&gt;</span></div>
<div class="m ln" style="left:32.30px;top:127.30px;font-size:15.8px;letter-spacing:-0.242px;line-height:22.8px">80</div>
<div class="m" style="left:174.65px;top:127.30px;font-size:15.8px;letter-spacing:-0.242px;line-height:22.8px"><span class="w">git push</span></div>
<div class="m ln" style="left:32.30px;top:150.10px;font-size:15.8px;letter-spacing:-0.242px;line-height:22.8px">81</div>
<div class="m" style="left:165.41px;top:150.10px;font-size:15.8px;letter-spacing:-0.242px;line-height:22.8px"><span class="g">&lt;/</span><span class="k">li</span><span class="g">&gt;</span></div>
<div class="m ln" style="left:32.30px;top:172.90px;font-size:15.8px;letter-spacing:-0.242px;line-height:22.8px">82</div>
<div class="m" style="left:165.41px;top:172.90px;font-size:15.8px;letter-spacing:-0.242px;line-height:22.8px"><span class="g">&lt;</span><span class="k">li</span><span class="g">&gt;</span></div>
<div class="m ln" style="left:32.30px;top:195.70px;font-size:15.8px;letter-spacing:-0.242px;line-height:22.8px">83</div>
<div class="m" style="left:183.89px;top:195.70px;font-size:15.8px;letter-spacing:-0.242px;line-height:22.8px"><span class="w">git commit --amend</span></div>
<div class="m ln" style="left:32.30px;top:218.50px;font-size:15.8px;letter-spacing:-0.242px;line-height:22.8px">84</div>
<div class="m" style="left:165.41px;top:218.50px;font-size:15.8px;letter-spacing:-0.242px;line-height:22.8px"><span class="g">&lt;/</span><span class="k">li</span><span class="g">&gt;</span></div>
<div class="m ln" style="left:32.30px;top:241.30px;font-size:15.8px;letter-spacing:-0.242px;line-height:22.8px">85</div>
<div class="m" style="left:137.69px;top:241.30px;font-size:15.8px;letter-spacing:-0.242px;line-height:22.8px"><span class="g">&lt;/</span><span class="k">ol</span><span class="g">&gt;</span></div>
<div class="m ln" style="left:32.30px;top:264.10px;font-size:15.8px;letter-spacing:-0.242px;line-height:22.8px">86</div>
<div class="m" style="left:137.69px;top:264.10px;font-size:15.8px;letter-spacing:-0.242px;line-height:22.8px"><span class="g">&lt;</span><span class="k">div</span><span class="g">&gt;</span></div>
<div class="m ln" style="left:32.30px;top:286.90px;font-size:15.8px;letter-spacing:-0.242px;line-height:22.8px">87</div>
<div class="m" style="left:156.17px;top:286.90px;font-size:15.8px;letter-spacing:-0.242px;line-height:22.8px"><span class="w">Numbers of commits: 6</span></div>
<div class="m ln" style="left:32.30px;top:309.70px;font-size:15.8px;letter-spacing:-0.242px;line-height:22.8px">88</div>
<div class="m" style="left:137.69px;top:309.70px;font-size:15.8px;letter-spacing:-0.242px;line-height:22.8px"><span class="g">&lt;/</span><span class="k">div</span><span class="g">&gt;</span></div>
</div>
<div class="m" style="left:470.00px;top:492.00px;font-size:15.8px;letter-spacing:-0.482px;line-height:20px"><span class="f">Date:   Fri Apr 16 21:09:33 2021 +0300</span></div>
<div class="m" style="left:470.00px;top:532.00px;font-size:15.8px;letter-spacing:-0.482px;line-height:20px"><span class="f">    modified the number of commits so far</span></div>
<div class="m" style="left:470.00px;top:572.00px;font-size:15.8px;letter-spacing:-0.482px;line-height:20px"><span class="y">commit 4e2a0afae6f6c9fd1422b5d77760c22fdcfd74a1</span></div>
<div class="m" style="left:470.00px;top:592.00px;font-size:15.8px;letter-spacing:-0.482px;line-height:20px"><span class="f">Author: Diana Toma &lt;toma.andreeadiana@yahoo.com&gt;</span></div>
<div class="m" style="left:470.00px;top:612.00px;font-size:15.8px;letter-spacing:-0.482px;line-height:20px"><span class="f">Date:   Fri Apr 16 13:46:19 2021 +0300</span></div>
<div class="m" style="left:470.00px;top:652.00px;font-size:15.8px;letter-spacing:-0.482px;line-height:20px"><span class="f">    [andreeatoma] added numbers of commits to page</span></div>
<div class="m" style="left:470.00px;top:692.00px;font-size:15.8px;letter-spacing:-0.482px;line-height:20px"><span class="y">commit 193e59deb6a8c6830b7b3a1d0b256ddf4e5cc875</span></div>
<div class="m" style="left:470.00px;top:712.00px;font-size:15.8px;letter-spacing:-0.482px;line-height:20px"><span class="f">Author: Diana Toma &lt;toma.andreeadiana@yahoo.com&gt;</span></div>
<div class="m" style="left:470.00px;top:732.00px;font-size:15.8px;letter-spacing:-0.482px;line-height:20px"><span class="f">Date:   Fri Apr 16 13:40:25 2021 +0300</span></div>
<div class="m" style="left:470.00px;top:792.00px;font-size:15.8px;letter-spacing:-0.482px;line-height:20px"><span class="gr">didi@DESKTOP-3DDU16A</span><span class="f"> </span><span class="mg">MINGW64</span><span class="f"> </span><span class="y">~/Desktop/practice-pentru-part-2/git-github-practice-exercises</span><span class="cy"> (challenges)</span></div>
<div class="m" style="left:470.00px;top:812.00px;font-size:15.8px;letter-spacing:-0.482px;line-height:20px"><span class="f">$ git revert 4e2a0afae6f6c9fd1422b5d77760c22fdcfd74a1</span></div>
<!-- ===== title bar ===== -->
<svg style="left:11px;top:7.9px" width="19.3" height="19.3" viewBox="0 0 100 100"><defs><linearGradient id="vsg" x1="0" x2="1" y1="0" y2="0"><stop offset="0" stop-color="#0c7fd0"/><stop offset=".6" stop-color="#1490de"/><stop offset=".75" stop-color="#14a6f0"/><stop offset="1" stop-color="#10aaf4"/></linearGradient></defs><path fill="url(#vsg)" d="M96.5 10.8 75.9.9a6.2 6.2 0 0 0-7.1 1.2L29.3 38 12.1 25a4.2 4.2 0 0 0-5.3.2l-5.5 5a4.2 4.2 0 0 0 0 6.1L16.2 50 1.3 63.7a4.2 4.2 0 0 0 0 6.1l5.5 5a4.2 4.2 0 0 0 5.3.2l17.2-13 39.5 35.9a6.2 6.2 0 0 0 7.1 1.2l20.6-9.9a6.2 6.2 0 0 0 3.5-5.6V16.4a6.2 6.2 0 0 0-3.5-5.6zM75 72.7 45.1 50 75 27.3z"/></svg>
<svg style="left:1455px;top:17px" width="14" height="2" viewBox="0 0 14 2"><rect x="0" y="0.2" width="14" height="1.5" fill="#d0d0d0"/></svg>
<svg style="left:1509px;top:10px" width="16" height="16" viewBox="0 0 16 16" fill="none" stroke="#d0d0d0" stroke-width="1.3"><rect x="1.6" y="4" width="10.4" height="10.4" rx="0.8"/><path d="M4.4 4V2.6a1 1 0 0 1 1-1h8a1 1 0 0 1 1 1v8a1 1 0 0 1-1 1H12"/></svg>
<svg style="left:1565px;top:11px" width="14" height="14" viewBox="0 0 14 14" fill="none" stroke="#d8d8d8" stroke-width="1.4"><path d="M0.5 0.3 13.3 13.1M13.3 0.3 0.5 13.1"/></svg>

<!-- ===== activity bar ===== -->
<svg style="left:0;top:36px" width="58" height="58" viewBox="0 0 58 58" fill="none" stroke="#ffffff" stroke-width="2.1" stroke-linejoin="round" stroke-linecap="round"><path d="M25.4 15.4H35.6L40.6 20.6V34.2H25.4Z"/><path d="M35.2 15.6V21H40.4" stroke-width="1.8"/><path d="M25 23H17V42.4H33.2V34.6"/></svg>
<svg style="left:0;top:94px" width="58" height="58" viewBox="0 0 58 58" fill="none" stroke="#858585" stroke-width="2"><circle cx="33" cy="28" r="9.2"/><path d="M26.8 35 16.4 47.2"/></svg>
<svg style="left:0;top:152px" width="58" height="58" viewBox="0 0 58 58" fill="none" stroke="#858585" stroke-width="2"><circle cx="22.8" cy="27.8" r="3.6"/><circle cx="22.8" cy="47.8" r="3.6"/><circle cx="35.6" cy="33.5" r="3.6"/><path d="M22.8 31.4V44.2M35.6 37.1c0 4.5-3 5.6-6.5 5.8-3 .2-5 .6-6.3 2"/></svg>
<svg style="left:0;top:210px" width="58" height="58" viewBox="0 0 58 58" fill="none" stroke="#858585" stroke-width="1.9" stroke-linejoin="round"><path d="M24.4 40V28.4L42.6 39.8 30.5 47.2"/><g stroke-width="1.7"><ellipse cx="21.2" cy="49.4" rx="4.2" ry="5.4" fill="#333"/><path d="M17.4 46.2h7.6M14 49.6h3M25.4 49.6h3M14.6 43.6l3 2.4M27.8 43.6l-3 2.4M14.6 55.6l3-2.4M27.8 55.6l-3-2.4M18.6 43.4a2.8 2.8 0 0 1 5.2 0"/></g></svg>
<svg style="left:0;top:268px" width="58" height="58" viewBox="0 0 58 58" fill="none" stroke="#858585" stroke-width="1.9" stroke-linejoin="round"><path d="M15.4 37.6H26.2V48.2H37V58.8H15.4ZM15.4 48.2H26.2V58.8"/><rect x="32.2" y="32.2" width="10.8" height="10.6" rx="0.6"/></svg>
<svg style="left:0;top:326px" width="58" height="58" viewBox="0 0 58 58" fill="none" stroke="#858585" stroke-width="1.6"><circle cx="29.6" cy="51.4" r="13.6"/><path d="M27.3 44.6V58.4M27.6 45.2 34.4 52" stroke-width="2"/><circle cx="27.4" cy="44.5" r="2.7" fill="#858585" stroke="none"/><circle cx="27.2" cy="58.5" r="2.7" fill="#858585" stroke="none"/><circle cx="34.5" cy="51.8" r="2.7" fill="#858585" stroke="none"/></svg>
<!-- account -->
<svg style="left:0;top:708px" width="58" height="58" viewBox="0 0 58 58" fill="none" stroke="#858585" stroke-width="1.9"><circle cx="29" cy="29.6" r="13.8"/><circle cx="29" cy="25.4" r="5.4"/><path d="M19.4 39.6a10.4 9.6 0 0 1 19.2 0"/></svg>
<svg style="left:28px;top:738px" width="20" height="20" viewBox="0 0 20 20"><circle cx="10.1" cy="9.6" r="9.4" fill="#007acc"/></svg>
<!-- gear -->
<svg style="left:0;top:770px" width="58" height="58" viewBox="0 0 58 58" fill="none" stroke="#858585" stroke-width="2.3" stroke-linejoin="round"><path d="M25.87 19.47 L26.18 15.68 L31.82 15.68 L32.13 19.47 L33.95 20.22 L36.85 17.76 L40.84 21.75 L38.38 24.65 L39.13 26.47 L42.92 26.78 L42.92 32.42 L39.13 32.73 L38.38 34.55 L40.84 37.45 L36.85 41.44 L33.95 38.98 L32.13 39.73 L31.82 43.52 L26.18 43.52 L25.87 39.73 L24.05 38.98 L21.15 41.44 L17.16 37.45 L19.62 34.55 L18.87 32.73 L15.08 32.42 L15.08 26.78 L18.87 26.47 L19.62 24.65 L17.16 21.75 L21.15 17.76 L24.05 20.22Z"/><circle cx="29" cy="29.6" r="3.4"/></svg>
<svg style="left:28px;top:800px" width="20" height="20" viewBox="0 0 20 20"><circle cx="10.1" cy="10" r="9.4" fill="#007acc"/></svg>

<!-- ===== sidebar ===== -->
<svg style="left:407px;top:55px" width="16" height="4" viewBox="0 0 16 4" fill="#c5c5c5"><circle cx="2" cy="2" r="1.3"/><circle cx="8" cy="2" r="1.3"/><circle cx="14" cy="2" r="1.3"/></svg>
<svg style="left:63px;top:88px" width="13" height="8" viewBox="0 0 13 8" fill="none" stroke="#c5c5c5" stroke-width="1.35"><path d="M1 1 6.4 6.4 11.8 1"/></svg>
<svg style="left:83px;top:111.7px" width="12" height="12" viewBox="0 0 12 12" fill="none" stroke="#c5c5c5" stroke-width="1.3"><path d="M0.9 0.8 11.2 11.1M11.2 0.8 0.9 11.1"/></svg>
<svg style="left:65.5px;top:139px" width="8" height="13" viewBox="0 0 8 13" fill="none" stroke="#c5c5c5" stroke-width="1.35"><path d="M1 1 6.6 6.2 1 11.6"/></svg>
<svg style="left:63px;top:168px" width="13" height="8" viewBox="0 0 13 8" fill="none" stroke="#c5c5c5" stroke-width="1.35"><path d="M1 1 6.4 6.4 11.8 1"/></svg>
<svg style="left:79px;top:194px" width="13" height="8" viewBox="0 0 13 8" fill="none" stroke="#c5c5c5" stroke-width="1.35"><path d="M1 1 6.4 6.4 11.8 1"/></svg>
<svg style="left:92.5px;top:217.5px" width="8" height="13" viewBox="0 0 8 13" fill="none" stroke="#c5c5c5" stroke-width="1.35"><path d="M1 1 6.6 6.2 1 11.6"/></svg>
<svg style="left:92.5px;top:243.9px" width="8" height="13" viewBox="0 0 8 13" fill="none" stroke="#c5c5c5" stroke-width="1.35"><path d="M1 1 6.6 6.2 1 11.6"/></svg>
<svg style="left:65.5px;top:814.5px" width="8" height="13" viewBox="0 0 8 13" fill="none" stroke="#c5c5c5" stroke-width="1.35"><path d="M1 1 6.6 6.2 1 11.6"/></svg>
<!-- html file icons (<>) -->
<svg width="0" height="0" style="left:0;top:0"><defs>
<g id="hi" fill="none" stroke="#e9672d" stroke-width="1.75"><path d="M5.3 0.7 1.3 4.8 5.3 8.9M7.5 0.7 11.5 4.8 7.5 8.9"/></g>
<g id="cube" fill="none" stroke="#3fa4f5" stroke-width="1.35" stroke-linejoin="round"><path d="M1.2 4.3 10.2 1 16.6 3.6V10L8 13.8 1.2 10.6Z"/><path d="M1.4 4.4 8 7.4 16.4 3.8M8 7.4V13.6"/></g>
<g id="chr" fill="none" stroke="#a9a9a9" stroke-width="1.35"><path d="M1 1 6.4 6.6 1 12.2"/></g>
</defs></svg>
<svg style="left:103.6px;top:111.7px" width="13" height="10" viewBox="0 0 12.8 9.6"><use href="#hi"/></svg>
<svg style="left:87.2px;top:270.8px" width="13" height="10" viewBox="0 0 12.8 9.6"><use href="#hi"/></svg>
<svg style="left:87.2px;top:297.2px" width="13" height="10" viewBox="0 0 12.8 9.6"><use href="#hi"/></svg>
<svg style="left:87.2px;top:323.6px" width="13" height="10" viewBox="0 0 12.8 9.6"><use href="#hi"/></svg>
<svg style="left:87.2px;top:350.0px" width="13" height="10" viewBox="0 0 12.8 9.6"><use href="#hi"/></svg>
<svg style="left:463.6px;top:52px" width="13" height="10" viewBox="0 0 12.8 9.6"><use href="#hi"/></svg>
<svg style="left:687.4px;top:86px" width="13" height="10" viewBox="0 0 12.8 9.6"><use href="#hi"/></svg>
<!-- README info icon -->
<svg style="left:85.1px;top:373.4px" width="15.2" height="15.2" viewBox="0 0 15 15" fill="none" stroke="#2fa0ca" stroke-width="1.4"><circle cx="7.5" cy="7.5" r="6.3"/><path d="M7.6 6.4V11M6 6.4h1.6M5.9 11h3.4" stroke-width="1.5"/><circle cx="7.5" cy="3.9" r="1" fill="#35a0c9" stroke="none"/></svg>
<!-- tab close -->
<svg style="left:581px;top:50.6px" width="12" height="12" viewBox="0 0 12 12" fill="none" stroke="#ffffff" stroke-width="1.4"><path d="M0.8 0.8 11 11M11 0.8 0.8 11"/></svg>
<!-- breadcrumb chevrons + cubes -->
<svg style="left:668.6px;top:84.6px" width="8" height="14" viewBox="0 0 8 14"><use href="#chr"/></svg>
<svg style="left:802.4px;top:84.6px" width="8" height="14" viewBox="0 0 8 14"><use href="#chr"/></svg>
<svg style="left:875.6px;top:84.6px" width="8" height="14" viewBox="0 0 8 14"><use href="#chr"/></svg>
<svg style="left:952.6px;top:84.6px" width="8" height="14" viewBox="0 0 8 14"><use href="#chr"/></svg>
<svg style="left:1028.4px;top:84.6px" width="8" height="14" viewBox="0 0 8 14"><use href="#chr"/></svg>
<svg style="left:815.6px;top:83.6px" width="18" height="15" viewBox="0 0 18 15"><use href="#cube"/></svg>
<svg style="left:889.2px;top:83.6px" width="18" height="15" viewBox="0 0 18 15"><use href="#cube"/></svg>
<svg style="left:966.2px;top:83.6px" width="18" height="15" viewBox="0 0 18 15"><use href="#cube"/></svg>
<svg style="left:1042.2px;top:83.6px" width="18" height="15" viewBox="0 0 18 15"><use href="#cube"/></svg>
<!-- editor actions -->
<svg style="left:1328px;top:48px" width="20" height="20" viewBox="0 0 20 20" fill="none" stroke="#d8d8d8" stroke-width="1.4"><circle cx="4.2" cy="3.8" r="2.3"/><circle cx="15.2" cy="16" r="2.3"/><path d="M4.2 6.2V12.4a2.4 2.4 0 0 0 2.4 2.4H10.6M8.4 12.2 11 14.8 8.4 17.4M15.2 13.6V7.6a2.4 2.4 0 0 0-2.4-2.4H9.2M11.4 2.6 8.8 5.2 11.4 7.8"/></svg>
<svg style="left:1366px;top:47px" width="21" height="19" viewBox="0 0 21 19" fill="none" stroke="#d8d8d8" stroke-width="1.5"><circle cx="11.4" cy="9.2" r="4.6"/><path d="M16 9.2h4M6.8 9.2H1.4M3.8 6.4 1.2 9.2 3.8 12"/></svg>
<svg style="left:1404px;top:47px" width="21" height="19" viewBox="0 0 21 19" fill="none" stroke="#6b6b6b" stroke-width="1.5"><circle cx="10.4" cy="9.2" r="4.6"/><path d="M15 9.2h4.6M5.8 9.2H1.2"/></svg>
<svg style="left:1443px;top:47px" width="21" height="19" viewBox="0 0 21 19" fill="none" stroke="#6b6b6b" stroke-width="1.5"><circle cx="9.4" cy="9.2" r="4.6"/><path d="M14 9.2h5.6M4.8 9.2H1M17.2 6.4 19.8 9.2 17.2 12"/></svg>
<svg style="left:1482px;top:47px" width="20" height="20" viewBox="0 0 20 20" fill="none" stroke="#d8d8d8" stroke-width="1.3"><circle cx="9.6" cy="9.6" r="8.2"/><path d="M8.2 5V14M8.4 5.6 12.6 10" stroke-width="1.5"/><circle cx="8.2" cy="5" r="1.7" fill="#d8d8d8" stroke="none"/><circle cx="8.2" cy="14" r="1.7" fill="#d8d8d8" stroke="none"/><circle cx="12.8" cy="10" r="1.7" fill="#d8d8d8" stroke="none"/></svg>
<svg style="left:1522px;top:48px" width="18" height="18" viewBox="0 0 18 18" fill="none" stroke="#d8d8d8" stroke-width="1.5"><rect x="1.2" y="1.6" width="15.2" height="14.6" rx="1.4"/><path d="M8.8 1.6V16.2"/></svg>
<svg style="left:1561px;top:55.2px" width="16" height="4" viewBox="0 0 16 4" fill="#d8d8d8"><circle cx="1.7" cy="2" r="1.4"/><circle cx="7.9" cy="2" r="1.4"/><circle cx="14.1" cy="2" r="1.4"/></svg>
<!-- panel actions -->
<svg style="left:1365px;top:453.5px" width="12" height="8" viewBox="0 0 12 8" fill="none" stroke="#e0e0e0" stroke-width="1.3"><path d="M0.8 1 5.8 6 10.8 1"/></svg>
<svg style="left:1406px;top:449px" width="17" height="17" viewBox="0 0 17 17" fill="none" stroke="#d0d0d0" stroke-width="1.5"><path d="M8.2 0.6V16M0.6 8.3H16"/></svg>
<svg style="left:1445px;top:449px" width="18" height="17" viewBox="0 0 18 17" fill="none" stroke="#d0d0d0" stroke-width="1.4"><rect x="1" y="1.2" width="15.4" height="14" rx="1.2"/><path d="M8.7 1.2V15.2"/></svg>
<svg style="left:1483px;top:448px" width="16" height="18" viewBox="0 0 16 18" fill="none" stroke="#d0d0d0" stroke-width="1.4"><path d="M1 4.2H14.6M5.2 4V1.6H10.4V4M2.8 4.4V15a1.2 1.2 0 0 0 1.2 1.2H11.6A1.2 1.2 0 0 0 12.8 15V4.4M5.9 6.8V13.6M9.7 6.8V13.6M7.8 6.8V13.6" /></svg>
<svg style="left:1523.6px;top:453px" width="13" height="8" viewBox="0 0 13 8" fill="none" stroke="#d0d0d0" stroke-width="1.4"><path d="M0.8 7 6.4 1.4 12 7"/></svg>
<svg style="left:1562.7px;top:451.9px" width="12" height="12" viewBox="0 0 12 12" fill="none" stroke="#d0d0d0" stroke-width="1.4"><path d="M0.8 0.8 10.6 10.6M10.6 0.8 0.8 10.6"/></svg>
<!-- ===== status bar icons ===== -->
<svg style="left:14px;top:838px" width="14" height="16" viewBox="0 0 14 16" fill="none" stroke="#ffffff" stroke-width="1.3"><path d="M1.6 5.8 6.4 10.2 1.6 14.6M12 1.2 7.2 5.8 12 10.2"/></svg>
<svg style="left:52px;top:837px" width="15" height="19" viewBox="0 0 15 19" fill="none" stroke="#ffffff" stroke-width="1.25"><circle cx="3.7" cy="3.5" r="2.1"/><circle cx="3.7" cy="15.6" r="2.1"/><circle cx="11.3" cy="7" r="2.1"/><path d="M3.7 5.6V13.5M11.3 9.1c0 2.6-1.6 3.3-3.7 3.5-1.8.1-3 .4-3.8 1.3"/></svg>
<svg style="left:157px;top:838.6px" width="19" height="16.4" viewBox="0 0 19 18" fill="none" stroke="#ffffff" stroke-width="1.45"><path d="M2.8 8.4A6.4 6.4 0 0 1 14.8 5.4M15.8 9.6A6.4 6.4 0 0 1 3.8 12.6"/><path d="M15.4 1.4V5.8H11M3.2 16.6V12.2H7.6" stroke-width="1.35"/></svg>
<svg style="left:194px;top:839.6px" width="16" height="16" viewBox="0 0 16 16" fill="none" stroke="#ffffff" stroke-width="1.25"><circle cx="7.6" cy="7.6" r="6.8"/><path d="M4.8 4.8 10.4 10.4M10.4 4.8 4.8 10.4"/></svg>
<svg style="left:227px;top:840.2px" width="16" height="13" viewBox="0 0 16 13" fill="none" stroke="#ffffff" stroke-width="1.2" stroke-linejoin="round"><path d="M7.6 1.2 14.4 12.2H0.8Z"/><path d="M7.6 4.8V8.6M7.6 9.6V11" stroke-width="1.3"/></svg>
<svg style="left:764px;top:837.6px" width="11" height="17" viewBox="0 0 11 17" fill="none" stroke="#ffffff" stroke-width="1.3"><circle cx="5.2" cy="8.6" r="3.6"/><path d="M5.2 0.4V5M5.2 12.2V16.6"/></svg>
<!-- go live broadcast -->
<svg style="left:1278.6px;top:838.6px" width="15" height="16" viewBox="0 0 15 16" fill="none" stroke="#ffffff" stroke-width="1.2"><path d="M3 11.2A6 6 0 1 1 11.4 11.2"/><path d="M5 8.8A3.2 3.2 0 1 1 9.4 8.8" /><circle cx="7.2" cy="6.6" r="1.2" fill="#fff" stroke="none"/><path d="M7.2 7.4V15.2" stroke-width="2.2"/></svg>
<!-- check-all -->
<svg width="0" height="0" style="left:0;top:0"><defs><g id="ca" fill="none" stroke="#ffffff" stroke-width="1.25"><path d="M0.6 6.8 4 10.4 10.6 0.8M5.4 7.4 8 10.4 16.4 0.8"/></g></defs></svg>
<svg style="left:1364px;top:841px" width="17" height="12" viewBox="0 0 17 12"><use href="#ca"/></svg>
<svg style="left:1442.4px;top:841px" width="17" height="12" viewBox="0 0 17 12"><use href="#ca"/></svg>
<!-- feedback -->
<svg style="left:1529.6px;top:838.8px" width="17" height="16" viewBox="0 0 17 16" fill="none" stroke="#ffffff" stroke-width="1.2" stroke-linejoin="round"><path d="M7.4 3.8V0.8H16V7.6H13L10.8 9.8V7.6"/><circle cx="5.6" cy="7.2" r="2.7"/><path d="M0.8 15.2A4.8 4.8 0 0 1 10.4 15.2"/></svg>
<!-- bell -->
<svg style="left:1566.6px;top:839.8px" width="15" height="15" viewBox="0 0 15 15" fill="none" stroke="#ffffff" stroke-width="1.25" stroke-linejoin="round"><path d="M2.6 10.6V5.6A4.5 4.5 0 0 1 11.6 5.6V10.6L13.4 11.6H0.8Z"/><path d="M5.6 12A1.6 1.6 0 0 0 8.8 12"/></svg>

<!-- ===== taskbar icons ===== -->
<!-- windows logo -->
<svg style="left:15.6px;top:871.7px" width="16.6" height="16.4" viewBox="0 0 17 17" fill="#ffffff"><path d="M0 2.3 6.9 1.3V7.9H0ZM7.8 1.2 16.8 0V7.9H7.8ZM0 8.8H6.9V15.4L0 14.4ZM7.8 8.8H16.8V16.6L7.8 15.5Z"/></svg>
<!-- search -->
<svg style="left:63px;top:871px" width="19" height="18" viewBox="0 0 19 18" fill="none" stroke="#ffffff" stroke-width="1.3"><circle cx="11.6" cy="6.7" r="5"/><path d="M8.2 10.6 1.2 16.8"/></svg>
<!-- explorer -->
<svg style="left:111.6px;top:870.6px" width="22" height="18.4" viewBox="0 0 22 18.4"><path d="M0.4 0.6H8.4L9.8 2.6H0.4Z" fill="#e8a317"/><rect x="0.4" y="2.2" width="21.2" height="13.8" fill="#ffd868"/><path d="M0.4 2.4H9L10 1.4H21.6V3H0.4Z" fill="#f7c53e"/><path d="M4.4 18.2V10.6H17.6V18.2H14.6V13.6H7.4V18.2Z" fill="#3f9ce4"/><rect x="7.4" y="13.6" width="7.2" height="2.4" fill="#e9b93a"/></svg>
<!-- edge -->
<svg style="left:160px;top:868px" width="25" height="24" viewBox="0 0 25 24"><defs><linearGradient id="eg1" x1="0" y1="0" x2="1" y2="0.35"><stop offset="0" stop-color="#2fb4f0"/><stop offset=".5" stop-color="#36c9b4"/><stop offset="1" stop-color="#86e24a"/></linearGradient><linearGradient id="eg2" x1="0" y1="0" x2="0.3" y2="1"><stop offset="0" stop-color="#1f9fe6"/><stop offset="1" stop-color="#0c59a4"/></linearGradient></defs><circle cx="12.2" cy="12" r="12" fill="url(#eg2)"/><path d="M0.9 8.4C2.8 3.2 7.2 0 12.4 0 19.6 0 24.4 5.6 24.2 11.6 24.1 15 21.4 16.6 18.4 16.6 15.6 16.6 14.2 15.4 14.6 14.2 15.2 12.8 15.6 11.8 14.8 10.2 13.6 8 10.4 6.6 7.2 7 4 7.4 2 9.2 0.9 8.4Z" fill="url(#eg1)"/><path d="M9.6 11.4C8.2 15.6 11.6 20.4 17.2 20.4 19.4 20.4 21.2 19.8 22.8 18.6 20.6 22 16.8 24 12.4 24 8 24 4.8 21.2 4.6 17.2 4.4 13.4 7 10.6 9.6 11.4Z" fill="#0b4e96" opacity=".9"/><path d="M14.6 14.2C13.8 15.8 15.4 17 18.4 16.6 16 18.8 11.4 17.6 10.8 14.2 10.4 11.8 12.2 9.8 14.8 10.2 15.6 11.8 15.2 12.8 14.6 14.2Z" fill="#20343d"/><path d="M25 13.2 24.2 13.4C23.6 15.4 21.6 16.6 18.4 16.6 19.6 17.8 21.4 18.2 23.2 17.8L25 17.4Z" fill="#21373f"/></svg>
<!-- vscode -->
<svg style="left:208.6px;top:868px" width="24.6" height="24.4" viewBox="0 0 100 100"><path fill="#0f80cc" d="M75 72.7 45.1 50 75 27.3V.9L29.3 38 12.1 25a4.2 4.2 0 0 0-5.3.2l-5.5 5a4.2 4.2 0 0 0 0 6.1L16.2 50 1.3 63.7a4.2 4.2 0 0 0 0 6.1l5.5 5a4.2 4.2 0 0 0 5.3.2l17.2-13L75 99.1z"/><path fill="#26a8f2" d="M96.5 10.8 75.9.9a6.2 6.2 0 0 0-7.1 1.2L65 6 75 27.3v45.4L65 94l3.8 3.9a6.2 6.2 0 0 0 7.1 1.2l20.6-9.9a6.2 6.2 0 0 0 3.5-5.6V16.4a6.2 6.2 0 0 0-3.5-5.6z"/></svg>
<!-- chrome -->
<svg style="left:258.4px;top:868.6px" width="23" height="23" viewBox="0 0 23 23"><circle cx="11.5" cy="11.5" r="11.3" fill="#db4437"/><path d="M11.5 11.5 1.72 5.85A11.3 11.3 0 0 0 9.5 22.6L14.4 13.2Z" fill="#1da462"/><path d="M11.5 11.5 9.5 22.6A11.3 11.3 0 0 0 21.3 5.85H11.5Z" fill="#ffcd40"/><path d="M1.72 5.85A11.3 11.3 0 0 1 21.3 5.85L11.5 6.3 6.9 14Z" fill="#db4437"/><circle cx="11.5" cy="11.5" r="5.3" fill="#f1f1f1"/><circle cx="11.5" cy="11.5" r="4.2" fill="#4285f4"/></svg>
<!-- notepad -->
<svg style="left:306.6px;top:868.6px" width="24" height="23" viewBox="0 0 24 23"><defs><linearGradient id="np" x1="0.9" y1="0" x2="0.1" y2="1"><stop offset="0" stop-color="#eef9fa"/><stop offset=".35" stop-color="#a9dbe2"/><stop offset=".7" stop-color="#55a9b8"/><stop offset="1" stop-color="#2b8595"/></linearGradient></defs><path d="M19.4 3 22.8 4.4 21.2 20.6 18 21.4Z" fill="#b8893a"/><path d="M9 1 20 3.2 18.2 22 15 20.4Z" fill="#e6ecee"/><path d="M8.8 1 18.6 3 15.4 20.6 0.6 16.4Z" fill="url(#np)"/><path d="M8.6 0.4 19.2 2.6 18.8 4.6 7.8 2.2Z" fill="#dfe5e8"/><path d="M9.6 1.2 18.4 3.1" stroke="#8d979c" stroke-width="0.9" stroke-dasharray="0.9 0.9" fill="none"/><path d="M15.4 20.6 18.2 22 18.6 19Z" fill="#f6f8f9"/></svg>
<!-- sticky notes -->
<svg style="left:356.8px;top:869px" width="23" height="22.4" viewBox="0 0 23 22.4"><defs><linearGradient id="sn" x1="0" y1="0" x2="0" y2="1"><stop offset="0" stop-color="#ffe100"/><stop offset="1" stop-color="#f7bc00"/></linearGradient></defs><rect x="0" y="0" width="22.6" height="22.2" rx="0.8" fill="url(#sn)"/><path d="M22.2 11.4V22H11.6Z" fill="#e9a800"/><path d="M11.4 11.4H22L11.4 22Z" fill="#3b3a39"/></svg>
<!-- tray -->
<svg style="left:1354.6px;top:876px" width="14" height="8" viewBox="0 0 14 8" fill="none" stroke="#ffffff" stroke-width="1.3"><path d="M0.8 7.2 6.6 1.2 12.4 7.2"/></svg>
<svg style="left:1377.4px;top:875.6px" width="16" height="10" viewBox="0 0 16 10" fill="none" stroke="#ffffff" stroke-width="1.1"><rect x="0.8" y="0.8" width="12.8" height="8" rx="0.6"/><rect x="2.6" y="2.6" width="7" height="4.4" fill="#fff" stroke="none"/><path d="M14.8 3.4V6.4" stroke-width="1.3"/></svg>
<svg style="left:1403.4px;top:874.4px" width="14" height="13" viewBox="0 0 14 13" fill="none" stroke="#e8e8e8" stroke-width="1.1"><path d="M0.6 12.4A12 12 0 0 1 12.6 0.8" opacity=".8"/><path d="M3.6 12.4A9 9 0 0 1 12.6 3.8"/><path d="M6.6 12.4A6 6 0 0 1 12.6 6.8"/><circle cx="11" cy="11.2" r="1.5" fill="#fff" stroke="none"/></svg>
<svg style="left:1424.4px;top:874px" width="18" height="13" viewBox="0 0 18 13" fill="none" stroke="#ffffff" stroke-width="1.1" stroke-linejoin="round"><path d="M0.8 4.2H3.4L7 0.8V11.6L3.4 8.4H0.8Z"/><path d="M9.2 4.2A3 3 0 0 1 9.2 8.2M11.2 2.4A5.4 5.4 0 0 1 11.2 10"/><path d="M13.6 0.8A7.6 7.6 0 0 1 13.6 11.6" opacity=".45"/></svg>
<svg style="left:1558.4px;top:872px" width="18" height="17" viewBox="0 0 18 17" fill="none" stroke="#ffffff" stroke-width="1.2"><path d="M0.8 0.8H16.4V12H11L8.6 14.6 6.2 12H0.8Z"/></svg>
<div class="t" style="left:50.75px;top:9px;font-size:15.6px;color:#cccccc;letter-spacing:-0.235px;">File</div>
<div class="t" style="left:93.50px;top:9px;font-size:15.6px;color:#cccccc;letter-spacing:-0.346px;">Edit</div>
<div class="t" style="left:139.50px;top:9px;font-size:15.6px;color:#cccccc;letter-spacing:-0.122px;">Selection</div>
<div class="t" style="left:221.00px;top:9px;font-size:15.6px;color:#cccccc;letter-spacing:-0.419px;">View</div>
<div class="t" style="left:273.00px;top:9px;font-size:15.6px;color:#cccccc;letter-spacing:-1.129px;">Go</div>
<div class="t" style="left:312.00px;top:9px;font-size:15.6px;color:#cccccc;letter-spacing:-0.467px;">Run</div>
<div class="t" style="left:359.00px;top:9px;font-size:15.6px;color:#cccccc;letter-spacing:-0.209px;">Terminal</div>
<div class="t" style="left:435.00px;top:9px;font-size:15.6px;color:#cccccc;letter-spacing:0.201px;">Help</div>
<div class="t" style="left:615.00px;top:9px;font-size:14.4px;color:#cccccc;letter-spacing:0.059px;">exercitii.html - practice-pentru-part-2 - Visual Studio Code</div>
<div class="t" style="left:81.00px;top:48px;font-size:13.2px;color:#bbbbbb;letter-spacing:-1.543px;">EXPLORER</div>
<div class="t" style="left:82.00px;top:82px;font-size:13.2px;color:#cccccc;letter-spacing:-0.647px;font-weight:700;">OPEN EDITORS</div>
<div class="t" style="left:125.00px;top:108px;font-size:15.6px;color:#cccccc;letter-spacing:0.063px;">exercitii.html</div>
<div class="t" style="left:219.50px;top:108px;font-size:14px;color:#cccccc;letter-spacing:0.058px;opacity:0.72;">git-github-practice-exercises</div>
<div class="t" style="left:82.00px;top:136px;font-size:13.2px;color:#cccccc;letter-spacing:-0.513px;font-weight:700;">OUTLINE</div>
<div class="t" style="left:82.00px;top:162px;font-size:13.2px;color:#cccccc;letter-spacing:-0.380px;font-weight:700;">PRACTICE-PENTRU-PART-2</div>
<div class="t" style="left:98.75px;top:188px;font-size:15.6px;color:#cccccc;letter-spacing:0.064px;">git-github-practice-exercises</div>
<div class="t" style="left:108.00px;top:214px;font-size:15.6px;color:#cccccc;letter-spacing:-0.854px;">assets</div>
<div class="t" style="left:108.00px;top:240px;font-size:15.6px;color:#cccccc;letter-spacing:0.027px;">style</div>
<div class="t" style="left:108.00px;top:267px;font-size:15.6px;color:#cccccc;letter-spacing:0.063px;">exercitii.html</div>
<div class="t" style="left:108.00px;top:293px;font-size:15.6px;color:#cccccc;letter-spacing:0.154px;">finalisti.html</div>
<div class="t" style="left:107.80px;top:320px;font-size:15.6px;color:#cccccc;letter-spacing:0.122px;">index.html</div>
<div class="t" style="left:107.00px;top:346px;font-size:15.6px;color:#cccccc;letter-spacing:0.370px;">prep.html</div>
<div class="t" style="left:107.80px;top:372px;font-size:15.6px;color:#cccccc;letter-spacing:-0.730px;">README.md</div>
<div class="t" style="left:82.00px;top:812px;font-size:13.2px;color:#cccccc;letter-spacing:-0.321px;font-weight:700;">TIMELINE</div>
<div class="t" style="left:485.00px;top:48px;font-size:15.6px;color:#ffffff;letter-spacing:0.044px;">exercitii.html</div>
<div class="t" style="left:465.75px;top:82px;font-size:15.6px;color:#a9a9a9;letter-spacing:0.055px;">git-github-practice-exercises</div>
<div class="t" style="left:708.75px;top:82px;font-size:15.6px;color:#a9a9a9;letter-spacing:0.005px;">exercitii.html</div>
<div class="t" style="left:837.75px;top:82px;font-size:15.6px;color:#a9a9a9;letter-spacing:0.752px;">html</div>
<div class="t" style="left:911.50px;top:82px;font-size:15.6px;color:#a9a9a9;letter-spacing:0.161px;">body</div>
<div class="t" style="left:988.00px;top:82px;font-size:15.6px;color:#a9a9a9;letter-spacing:0.291px;">main</div>
<div class="t" style="left:1065.00px;top:82px;font-size:15.6px;color:#a9a9a9;letter-spacing:-0.088px;">div.exercises-grid</div>
<div class="t" style="left:470.00px;top:449px;font-size:13.2px;color:#969696;letter-spacing:-1.248px;">PROBLEMS</div>
<div class="t" style="left:558.50px;top:449px;font-size:13.2px;color:#969696;letter-spacing:-0.931px;">OUTPUT</div>
<div class="t" style="left:631.80px;top:449px;font-size:13.2px;color:#969696;letter-spacing:-1.004px;">DEBUG CONSOLE</div>
<div class="t" style="left:759.00px;top:449px;font-size:13.2px;color:#e7e7e7;letter-spacing:-0.763px;">TERMINAL</div>
<div class="t" style="left:1192.50px;top:449px;font-size:15.6px;color:#f0f0f0;letter-spacing:-0.080px;">2: bash</div>
<div class="t" style="left:72.00px;top:838px;font-size:14.4px;color:#ffffff;letter-spacing:-0.290px;">challenges</div>
<div class="t" style="left:214.50px;top:838px;font-size:14.4px;color:#ffffff;">0</div>
<div class="t" style="left:247.00px;top:838px;font-size:14.4px;color:#ffffff;">0</div>
<div class="t" style="left:781.50px;top:838px;font-size:14.4px;color:#ffffff;letter-spacing:-0.100px;">lampava, a month ago</div>
<div class="t" style="left:941.00px;top:838px;font-size:14.4px;color:#ffffff;letter-spacing:-0.236px;">Ln 89, Col 1</div>
<div class="t" style="left:1035.00px;top:838px;font-size:14.4px;color:#ffffff;letter-spacing:-0.749px;">Spaces: 2</div>
<div class="t" style="left:1112.00px;top:838px;font-size:14.4px;color:#ffffff;letter-spacing:-0.441px;">UTF-8</div>
<div class="t" style="left:1170.00px;top:838px;font-size:14.4px;color:#ffffff;letter-spacing:-2.263px;">CRLF</div>
<div class="t" style="left:1220.00px;top:838px;font-size:14.4px;color:#ffffff;letter-spacing:-0.390px;">HTML</div>
<div class="t" style="left:1298.75px;top:838px;font-size:14.4px;color:#ffffff;letter-spacing:-0.557px;">Go Live</div>
<div class="t" style="left:1384.50px;top:838px;font-size:14.4px;color:#ffffff;letter-spacing:-0.780px;">ESLint</div>
<div class="t" style="left:1463.00px;top:838px;font-size:14.4px;color:#ffffff;letter-spacing:0.058px;">Prettier</div>
<div class="t" style="left:1451.30px;top:870px;font-size:11.6px;color:#ffffff;letter-spacing:-1.403px;">ENG</div>
<div class="t" style="left:1500.00px;top:861px;font-size:11.6px;color:#ffffff;letter-spacing:-0.516px;">21:53</div>
<div class="t" style="left:1488.20px;top:879px;font-size:11.6px;color:#ffffff;letter-spacing:-0.697px;">16.04.2021</div>
<div class="t" style="left:35.80px;top:738px;font-size:11.5px;color:#ffffff;font-weight:700;">1</div>
<div class="t" style="left:35.80px;top:800px;font-size:11.5px;color:#ffffff;font-weight:700;">1</div>
</div>
</body>
</html>
